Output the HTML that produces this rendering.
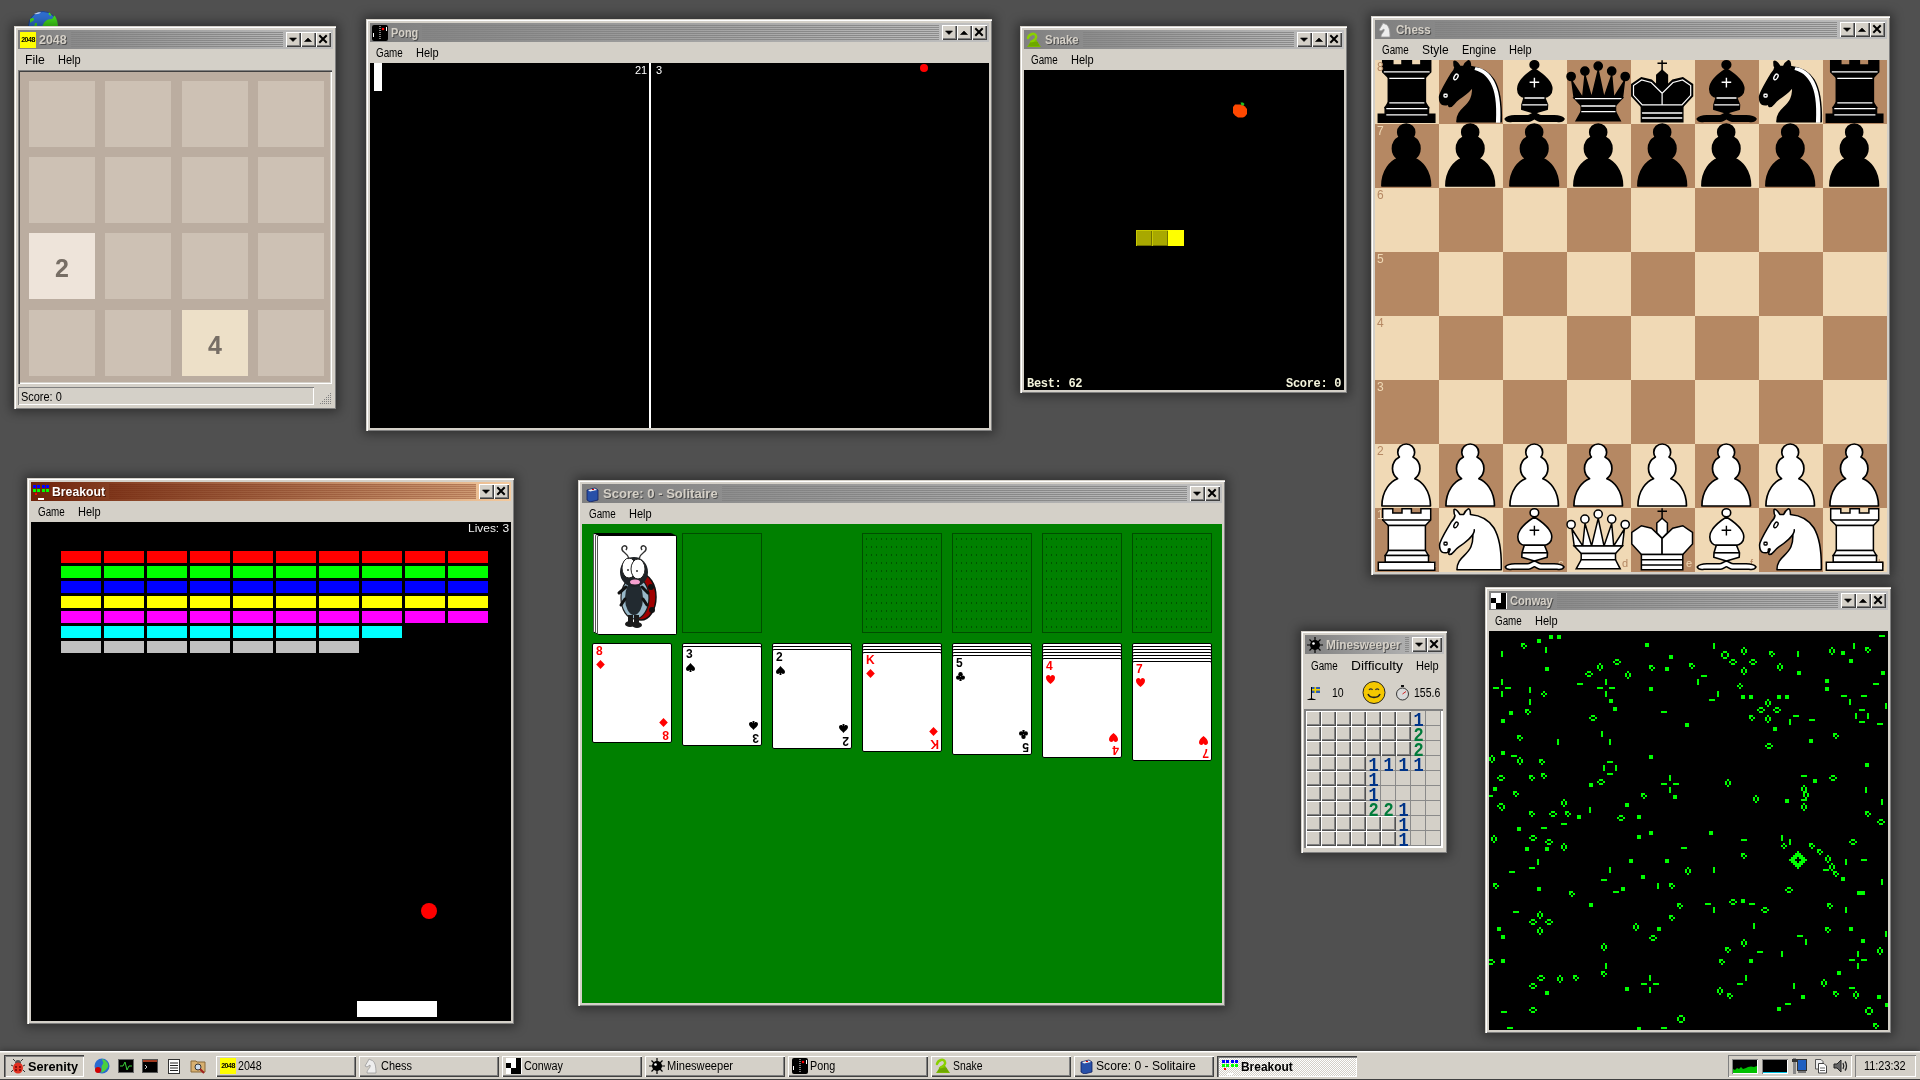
<!DOCTYPE html><html><head><meta charset="utf-8"><style>
*{margin:0;padding:0;box-sizing:border-box}
html,body{width:1920px;height:1080px;overflow:hidden;background:#505050;font-family:'Liberation Sans',sans-serif}
div,svg{position:absolute}
#root{left:0;top:0;width:1920px;height:1080px;will-change:transform;overflow:hidden}
.win{background:#d4d0c8;box-shadow:inset 1px 1px 0 #d4d0c8,inset 2px 2px 0 #ffffff,inset -1px -1px 0 #808080,0 0 10px 3px rgba(0,0,0,0.4)}
.btn{width:15px;height:15px;background:#d4d0c8;box-shadow:inset 1px 1px #ffffff,inset -1px -1px #404040,inset -2px -2px #808080}
.btn svg{left:0;top:0}
</style></head><body><div id="root"><svg style="left:28px;top:11px" width="30" height="16" viewBox="0 0 30 16"><circle cx="15" cy="15" r="14.5" fill="#2f6fd0" stroke="#1a3a80" stroke-width="0.8"/><path d="M14,16 C 16,11 18,8 24,8 C 26,7 25,4 27,5 C 29,8 30,12 30,16 Z" fill="#44dd1a"/><path d="M2,8 C 4,7 6,6 6,9 C 5,11 3,10 2,12 Z" fill="#44dd1a"/><path d="M6,16 L7,12 L9,12 L9,16 Z" fill="#44dd1a"/><path d="M21,1.5 C 22,2 24,4 23,5 C 21,4 20,3 21,1.5 Z" fill="#44dd1a"/><path d="M6,3 C 9,1.5 11,1 13,1.5 C 11,3 8,3.5 6,3 Z" fill="#e8f0ff" opacity="0.8"/></svg>
<div class="win" style="left:14px;top:26px;width:322px;height:383px"></div>
<div style="left:18px;top:30px;width:315px;height:19px;background:linear-gradient(to right,#808080,#c0c0c0)"></div>
<div style="left:71px;top:32px;width:212px;height:15px;background:repeating-linear-gradient(to bottom,rgba(128,128,128,0.8) 0 1px,transparent 1px 2px)"></div>
<div style="left:20px;top:32px;width:16px;height:16px"><div style="left:0;top:0;width:16px;height:16px;background:#ffff00;font:bold 7px 'Liberation Sans';line-height:16px;text-align:center;letter-spacing:-0.5px;color:#000">2048</div></div>
<div style="left:39px;top:30px;height:20px;font:bold 12px 'Liberation Sans';line-height:20px;color:#d5d0c7;white-space:pre;transform:scaleX(1.036);transform-origin:0 0;text-shadow:1px 1px 0 #4c4c4c">2048</div>
<div class="btn" style="left:316px;top:32px"><svg width="15" height="15" viewBox="0 0 15 15"><path d="M4 4L10 10M10 4L4 10" stroke="#000" stroke-width="2" stroke-linecap="square"/></svg></div>
<div class="btn" style="left:301px;top:32px"><svg width="15" height="15" viewBox="0 0 15 15"><path d="M3.5 9.5L7 6L10.5 9.5Z" fill="#000" stroke="#000" stroke-width="0.6"/></svg></div>
<div class="btn" style="left:286px;top:32px"><svg width="15" height="15" viewBox="0 0 15 15"><path d="M3.5 6L10.5 6L7 9.5Z" fill="#000" stroke="#000" stroke-width="0.6"/></svg></div>
<div style="left:25px;top:50px;height:20px;font:normal 12px 'Liberation Sans';line-height:20px;color:#000;white-space:pre;transform:scaleX(1.017);transform-origin:0 0;">File</div>
<div style="left:58px;top:50px;height:20px;font:normal 12px 'Liberation Sans';line-height:20px;color:#000;white-space:pre;transform:scaleX(0.920);transform-origin:0 0;">Help</div>
<div style="left:18px;top:70px;width:314px;height:314px;background:#bbada0;box-shadow:inset 1px 1px #808080,inset 2px 2px #404040,inset -1px -1px #ffffff,inset -2px -2px #d4d0c8"></div>
<div style="left:29px;top:81px;width:66px;height:66px;background:#cdc1b4;"></div>
<div style="left:105px;top:81px;width:66px;height:66px;background:#cdc1b4;"></div>
<div style="left:182px;top:81px;width:66px;height:66px;background:#cdc1b4;"></div>
<div style="left:258px;top:81px;width:66px;height:66px;background:#cdc1b4;"></div>
<div style="left:29px;top:157px;width:66px;height:66px;background:#cdc1b4;"></div>
<div style="left:105px;top:157px;width:66px;height:66px;background:#cdc1b4;"></div>
<div style="left:182px;top:157px;width:66px;height:66px;background:#cdc1b4;"></div>
<div style="left:258px;top:157px;width:66px;height:66px;background:#cdc1b4;"></div>
<div style="left:29px;top:233px;width:66px;height:66px;background:#eee4da;"></div>
<div style="left:29px;top:233px;width:66px;height:66px;text-align:center;font:bold 25px 'Liberation Sans';line-height:70px;color:#776e65">2</div>
<div style="left:105px;top:233px;width:66px;height:66px;background:#cdc1b4;"></div>
<div style="left:182px;top:233px;width:66px;height:66px;background:#cdc1b4;"></div>
<div style="left:258px;top:233px;width:66px;height:66px;background:#cdc1b4;"></div>
<div style="left:29px;top:310px;width:66px;height:66px;background:#cdc1b4;"></div>
<div style="left:105px;top:310px;width:66px;height:66px;background:#cdc1b4;"></div>
<div style="left:182px;top:310px;width:66px;height:66px;background:#ede0c8;"></div>
<div style="left:182px;top:310px;width:66px;height:66px;text-align:center;font:bold 25px 'Liberation Sans';line-height:70px;color:#776e65">4</div>
<div style="left:258px;top:310px;width:66px;height:66px;background:#cdc1b4;"></div>
<div style="left:18px;top:387px;width:296px;height:18px;background:#d4d0c8;box-shadow:inset 1px 1px #808080,inset -1px -1px #ffffff"></div>
<div style="left:21px;top:387px;height:20px;font:normal 12px 'Liberation Sans';line-height:20px;color:#000;white-space:pre;transform:scaleX(0.911);transform-origin:0 0;">Score: 0</div>
<svg style="position:absolute;left:316px;top:391px" width="16" height="14" viewBox="0 0 16 14"><rect x="14" y="12" width="1" height="1" fill="#808080"/><rect x="12" y="12" width="1" height="1" fill="#808080"/><rect x="14" y="10" width="1" height="1" fill="#808080"/><rect x="10" y="12" width="1" height="1" fill="#808080"/><rect x="12" y="10" width="1" height="1" fill="#808080"/><rect x="14" y="8" width="1" height="1" fill="#808080"/><rect x="8" y="12" width="1" height="1" fill="#808080"/><rect x="10" y="10" width="1" height="1" fill="#808080"/><rect x="12" y="8" width="1" height="1" fill="#808080"/><rect x="14" y="6" width="1" height="1" fill="#808080"/><rect x="6" y="12" width="1" height="1" fill="#808080"/><rect x="8" y="10" width="1" height="1" fill="#808080"/><rect x="10" y="8" width="1" height="1" fill="#808080"/><rect x="12" y="6" width="1" height="1" fill="#808080"/><rect x="14" y="4" width="1" height="1" fill="#808080"/><rect x="4" y="12" width="1" height="1" fill="#808080"/><rect x="6" y="10" width="1" height="1" fill="#808080"/><rect x="8" y="8" width="1" height="1" fill="#808080"/><rect x="10" y="6" width="1" height="1" fill="#808080"/><rect x="12" y="4" width="1" height="1" fill="#808080"/><rect x="14" y="2" width="1" height="1" fill="#808080"/></svg>
<div class="win" style="left:366px;top:19px;width:626px;height:412px"></div>
<div style="left:370px;top:23px;width:619px;height:19px;background:linear-gradient(to right,#808080,#c0c0c0)"></div>
<div style="left:422px;top:25px;width:517px;height:15px;background:repeating-linear-gradient(to bottom,rgba(128,128,128,0.8) 0 1px,transparent 1px 2px)"></div>
<div style="left:372px;top:25px;width:16px;height:16px"><svg width="16" height="16" viewBox="0 0 16 16"><rect x="0" y="0" width="16" height="16" rx="2" fill="#000"/><rect x="1" y="8" width="1" height="4" fill="#fff"/><rect x="14" y="2" width="1" height="4" fill="#fff"/><path d="M8,1 V15" stroke="#fff" stroke-dasharray="1 1"/><circle cx="11" cy="4" r="1.3" fill="#f00"/></svg></div>
<div style="left:391px;top:23px;height:20px;font:bold 12px 'Liberation Sans';line-height:20px;color:#d5d0c7;white-space:pre;transform:scaleX(0.910);transform-origin:0 0;text-shadow:1px 1px 0 #4c4c4c">Pong</div>
<div class="btn" style="left:972px;top:25px"><svg width="15" height="15" viewBox="0 0 15 15"><path d="M4 4L10 10M10 4L4 10" stroke="#000" stroke-width="2" stroke-linecap="square"/></svg></div>
<div class="btn" style="left:957px;top:25px"><svg width="15" height="15" viewBox="0 0 15 15"><path d="M3.5 9.5L7 6L10.5 9.5Z" fill="#000" stroke="#000" stroke-width="0.6"/></svg></div>
<div class="btn" style="left:942px;top:25px"><svg width="15" height="15" viewBox="0 0 15 15"><path d="M3.5 6L10.5 6L7 9.5Z" fill="#000" stroke="#000" stroke-width="0.6"/></svg></div>
<div style="left:376px;top:43px;height:20px;font:normal 12px 'Liberation Sans';line-height:20px;color:#000;white-space:pre;transform:scaleX(0.818);transform-origin:0 0;">Game</div>
<div style="left:416px;top:43px;height:20px;font:normal 12px 'Liberation Sans';line-height:20px;color:#000;white-space:pre;transform:scaleX(0.920);transform-origin:0 0;">Help</div>
<div style="left:370px;top:63px;width:619px;height:365px;background:#000;"></div>
<div style="left:649px;top:63px;width:2px;height:365px;background:#fff;"></div>
<div style="left:374px;top:63px;width:8px;height:28px;background:#fff;"></div>
<div style="left:635px;top:60px;height:20px;font:normal 11px 'Liberation Sans';line-height:20px;color:#fff;white-space:pre;">21</div>
<div style="left:656px;top:60px;height:20px;font:normal 11px 'Liberation Sans';line-height:20px;color:#fff;white-space:pre;">3</div>
<div style="left:920px;top:64px;width:8px;height:8px;border-radius:50%;background:#f00"></div>
<div class="win" style="left:1020px;top:26px;width:327px;height:367px"></div>
<div style="left:1024px;top:30px;width:320px;height:19px;background:linear-gradient(to right,#808080,#c0c0c0)"></div>
<div style="left:1083px;top:32px;width:211px;height:15px;background:repeating-linear-gradient(to bottom,rgba(128,128,128,0.8) 0 1px,transparent 1px 2px)"></div>
<div style="left:1026px;top:32px;width:16px;height:16px"><svg width="16" height="16" viewBox="0 0 16 16"><path d="M1,15 L5,9 C 6,7 10,7 11,9 L15,15 Z" fill="#7ab800"/><path d="M2,6 C 3,2 9,0 10,4 C 11,7 7,9 5,10" fill="none" stroke="#8ad000" stroke-width="2.5" stroke-linecap="round"/><path d="M4,11 H12 M3,13 H13" stroke="#5a9000" stroke-width="0.8"/></svg></div>
<div style="left:1045px;top:30px;height:20px;font:bold 12px 'Liberation Sans';line-height:20px;color:#d5d0c7;white-space:pre;transform:scaleX(0.953);transform-origin:0 0;text-shadow:1px 1px 0 #4c4c4c">Snake</div>
<div class="btn" style="left:1327px;top:32px"><svg width="15" height="15" viewBox="0 0 15 15"><path d="M4 4L10 10M10 4L4 10" stroke="#000" stroke-width="2" stroke-linecap="square"/></svg></div>
<div class="btn" style="left:1312px;top:32px"><svg width="15" height="15" viewBox="0 0 15 15"><path d="M3.5 9.5L7 6L10.5 9.5Z" fill="#000" stroke="#000" stroke-width="0.6"/></svg></div>
<div class="btn" style="left:1297px;top:32px"><svg width="15" height="15" viewBox="0 0 15 15"><path d="M3.5 6L10.5 6L7 9.5Z" fill="#000" stroke="#000" stroke-width="0.6"/></svg></div>
<div style="left:1031px;top:50px;height:20px;font:normal 12px 'Liberation Sans';line-height:20px;color:#000;white-space:pre;transform:scaleX(0.818);transform-origin:0 0;">Game</div>
<div style="left:1071px;top:50px;height:20px;font:normal 12px 'Liberation Sans';line-height:20px;color:#000;white-space:pre;transform:scaleX(0.920);transform-origin:0 0;">Help</div>
<div style="left:1024px;top:70px;width:320px;height:320px;background:#000;"></div>
<div style="left:1136px;top:230px;width:16px;height:16px;background:#a8a800;box-shadow:inset 1px 1px #c8c800,inset -1px -1px #707000"></div>
<div style="left:1152px;top:230px;width:16px;height:16px;background:#a8a800;box-shadow:inset 1px 1px #c8c800,inset -1px -1px #707000"></div>
<div style="left:1168px;top:230px;width:16px;height:16px;background:#ffff00;"></div>
<svg style="left:1232px;top:102px" width="16" height="16" viewBox="0 0 16 16"><path d="M3,2.5 H8 L11,3 L13,4.5 L15,7 V12 L13,14.5 L11,15.5 H6 L3,13.5 L1,11 V5 Z" fill="#ff4800"/><path d="M8.5,0.5 H11 L12.5,2 L11.5,3.5 H9.5 Z" fill="#20c020"/></svg>
<div style="left:1027px;top:374px;height:20px;font:bold 12px 'Liberation Mono';line-height:20px;color:#f4f4dc;white-space:pre;letter-spacing:-0.3px">Best: 62</div>
<div style="left:1286px;top:374px;height:20px;font:bold 12px 'Liberation Mono';line-height:20px;color:#f4f4dc;white-space:pre;letter-spacing:-0.3px">Score: 0</div>
<div class="win" style="left:1371px;top:16px;width:519px;height:559px"></div>
<div style="left:1375px;top:20px;width:512px;height:19px;background:linear-gradient(to right,#808080,#c0c0c0)"></div>
<div style="left:1435px;top:22px;width:402px;height:15px;background:repeating-linear-gradient(to bottom,rgba(128,128,128,0.8) 0 1px,transparent 1px 2px)"></div>
<div style="left:1377px;top:22px;width:16px;height:16px"><svg width="16" height="16" viewBox="0 0 16 16"><path d="M6,1 L8,2 C 12,3 13,8 13,15 H4 C 4,11 8,10 7,7 L4,9 L2,8 L5,3 Z" fill="#eee" stroke="#999" stroke-width="0.8"/></svg></div>
<div style="left:1396px;top:20px;height:20px;font:bold 12px 'Liberation Sans';line-height:20px;color:#d5d0c7;white-space:pre;transform:scaleX(0.963);transform-origin:0 0;text-shadow:1px 1px 0 #4c4c4c">Chess</div>
<div class="btn" style="left:1870px;top:22px"><svg width="15" height="15" viewBox="0 0 15 15"><path d="M4 4L10 10M10 4L4 10" stroke="#000" stroke-width="2" stroke-linecap="square"/></svg></div>
<div class="btn" style="left:1855px;top:22px"><svg width="15" height="15" viewBox="0 0 15 15"><path d="M3.5 9.5L7 6L10.5 9.5Z" fill="#000" stroke="#000" stroke-width="0.6"/></svg></div>
<div class="btn" style="left:1840px;top:22px"><svg width="15" height="15" viewBox="0 0 15 15"><path d="M3.5 6L10.5 6L7 9.5Z" fill="#000" stroke="#000" stroke-width="0.6"/></svg></div>
<div style="left:1382px;top:40px;height:20px;font:normal 12px 'Liberation Sans';line-height:20px;color:#000;white-space:pre;transform:scaleX(0.818);transform-origin:0 0;">Game</div>
<div style="left:1422px;top:40px;height:20px;font:normal 12px 'Liberation Sans';line-height:20px;color:#000;white-space:pre;transform:scaleX(1.000);transform-origin:0 0;">Style</div>
<div style="left:1462px;top:40px;height:20px;font:normal 12px 'Liberation Sans';line-height:20px;color:#000;white-space:pre;transform:scaleX(0.910);transform-origin:0 0;">Engine</div>
<div style="left:1509px;top:40px;height:20px;font:normal 12px 'Liberation Sans';line-height:20px;color:#000;white-space:pre;transform:scaleX(0.920);transform-origin:0 0;">Help</div>
<div style="left:1375px;top:60px;width:64px;height:64px;background:#f0d9b5;"></div>
<div style="left:1439px;top:60px;width:64px;height:64px;background:#b58863;"></div>
<div style="left:1503px;top:60px;width:64px;height:64px;background:#f0d9b5;"></div>
<div style="left:1567px;top:60px;width:64px;height:64px;background:#b58863;"></div>
<div style="left:1631px;top:60px;width:64px;height:64px;background:#f0d9b5;"></div>
<div style="left:1695px;top:60px;width:64px;height:64px;background:#b58863;"></div>
<div style="left:1759px;top:60px;width:64px;height:64px;background:#f0d9b5;"></div>
<div style="left:1823px;top:60px;width:64px;height:64px;background:#b58863;"></div>
<div style="left:1375px;top:124px;width:64px;height:64px;background:#b58863;"></div>
<div style="left:1439px;top:124px;width:64px;height:64px;background:#f0d9b5;"></div>
<div style="left:1503px;top:124px;width:64px;height:64px;background:#b58863;"></div>
<div style="left:1567px;top:124px;width:64px;height:64px;background:#f0d9b5;"></div>
<div style="left:1631px;top:124px;width:64px;height:64px;background:#b58863;"></div>
<div style="left:1695px;top:124px;width:64px;height:64px;background:#f0d9b5;"></div>
<div style="left:1759px;top:124px;width:64px;height:64px;background:#b58863;"></div>
<div style="left:1823px;top:124px;width:64px;height:64px;background:#f0d9b5;"></div>
<div style="left:1375px;top:188px;width:64px;height:64px;background:#f0d9b5;"></div>
<div style="left:1439px;top:188px;width:64px;height:64px;background:#b58863;"></div>
<div style="left:1503px;top:188px;width:64px;height:64px;background:#f0d9b5;"></div>
<div style="left:1567px;top:188px;width:64px;height:64px;background:#b58863;"></div>
<div style="left:1631px;top:188px;width:64px;height:64px;background:#f0d9b5;"></div>
<div style="left:1695px;top:188px;width:64px;height:64px;background:#b58863;"></div>
<div style="left:1759px;top:188px;width:64px;height:64px;background:#f0d9b5;"></div>
<div style="left:1823px;top:188px;width:64px;height:64px;background:#b58863;"></div>
<div style="left:1375px;top:252px;width:64px;height:64px;background:#b58863;"></div>
<div style="left:1439px;top:252px;width:64px;height:64px;background:#f0d9b5;"></div>
<div style="left:1503px;top:252px;width:64px;height:64px;background:#b58863;"></div>
<div style="left:1567px;top:252px;width:64px;height:64px;background:#f0d9b5;"></div>
<div style="left:1631px;top:252px;width:64px;height:64px;background:#b58863;"></div>
<div style="left:1695px;top:252px;width:64px;height:64px;background:#f0d9b5;"></div>
<div style="left:1759px;top:252px;width:64px;height:64px;background:#b58863;"></div>
<div style="left:1823px;top:252px;width:64px;height:64px;background:#f0d9b5;"></div>
<div style="left:1375px;top:316px;width:64px;height:64px;background:#f0d9b5;"></div>
<div style="left:1439px;top:316px;width:64px;height:64px;background:#b58863;"></div>
<div style="left:1503px;top:316px;width:64px;height:64px;background:#f0d9b5;"></div>
<div style="left:1567px;top:316px;width:64px;height:64px;background:#b58863;"></div>
<div style="left:1631px;top:316px;width:64px;height:64px;background:#f0d9b5;"></div>
<div style="left:1695px;top:316px;width:64px;height:64px;background:#b58863;"></div>
<div style="left:1759px;top:316px;width:64px;height:64px;background:#f0d9b5;"></div>
<div style="left:1823px;top:316px;width:64px;height:64px;background:#b58863;"></div>
<div style="left:1375px;top:380px;width:64px;height:64px;background:#b58863;"></div>
<div style="left:1439px;top:380px;width:64px;height:64px;background:#f0d9b5;"></div>
<div style="left:1503px;top:380px;width:64px;height:64px;background:#b58863;"></div>
<div style="left:1567px;top:380px;width:64px;height:64px;background:#f0d9b5;"></div>
<div style="left:1631px;top:380px;width:64px;height:64px;background:#b58863;"></div>
<div style="left:1695px;top:380px;width:64px;height:64px;background:#f0d9b5;"></div>
<div style="left:1759px;top:380px;width:64px;height:64px;background:#b58863;"></div>
<div style="left:1823px;top:380px;width:64px;height:64px;background:#f0d9b5;"></div>
<div style="left:1375px;top:444px;width:64px;height:64px;background:#f0d9b5;"></div>
<div style="left:1439px;top:444px;width:64px;height:64px;background:#b58863;"></div>
<div style="left:1503px;top:444px;width:64px;height:64px;background:#f0d9b5;"></div>
<div style="left:1567px;top:444px;width:64px;height:64px;background:#b58863;"></div>
<div style="left:1631px;top:444px;width:64px;height:64px;background:#f0d9b5;"></div>
<div style="left:1695px;top:444px;width:64px;height:64px;background:#b58863;"></div>
<div style="left:1759px;top:444px;width:64px;height:64px;background:#f0d9b5;"></div>
<div style="left:1823px;top:444px;width:64px;height:64px;background:#b58863;"></div>
<div style="left:1375px;top:508px;width:64px;height:64px;background:#b58863;"></div>
<div style="left:1439px;top:508px;width:64px;height:64px;background:#f0d9b5;"></div>
<div style="left:1503px;top:508px;width:64px;height:64px;background:#b58863;"></div>
<div style="left:1567px;top:508px;width:64px;height:64px;background:#f0d9b5;"></div>
<div style="left:1631px;top:508px;width:64px;height:64px;background:#b58863;"></div>
<div style="left:1695px;top:508px;width:64px;height:64px;background:#f0d9b5;"></div>
<div style="left:1759px;top:508px;width:64px;height:64px;background:#b58863;"></div>
<div style="left:1823px;top:508px;width:64px;height:64px;background:#f0d9b5;"></div>
<div style="left:1430px;top:556px;height:14px;font:11px 'Liberation Sans';line-height:14px;color:#f0d9b5">a</div>
<div style="left:1494px;top:556px;height:14px;font:11px 'Liberation Sans';line-height:14px;color:#b58863">b</div>
<div style="left:1558px;top:556px;height:14px;font:11px 'Liberation Sans';line-height:14px;color:#f0d9b5">c</div>
<div style="left:1622px;top:556px;height:14px;font:11px 'Liberation Sans';line-height:14px;color:#b58863">d</div>
<div style="left:1686px;top:556px;height:14px;font:11px 'Liberation Sans';line-height:14px;color:#f0d9b5">e</div>
<div style="left:1750px;top:556px;height:14px;font:11px 'Liberation Sans';line-height:14px;color:#b58863">f</div>
<div style="left:1814px;top:556px;height:14px;font:11px 'Liberation Sans';line-height:14px;color:#f0d9b5">g</div>
<div style="left:1878px;top:556px;height:14px;font:11px 'Liberation Sans';line-height:14px;color:#b58863">h</div>
<div style="left:1375px;top:60px;width:64px;height:64px"><svg width="64" height="64" viewBox="0 0 64 64" style="overflow:visible"><g fill="#000" stroke="#000" stroke-width="1.5" stroke-linejoin="miter"><path d="M7.7,12 V0.8 H17.8 V5 H27 V0.8 H36.4 V5 H45.9 V0.8 H55.7 V12 L50.4,17.5 H13.3 Z"/><path d="M13.3,17.5 H50.4 V42.4 H13.3 Z"/><path d="M13.3,42.4 H50.4 L53.5,47.6 H10.2 Z"/><path d="M10.2,47.6 H53.5 V54.2 H10.2 Z"/><path d="M3.3,54.2 H59.8 V62.2 H3.3 Z"/></g><path d="M8.8,11.8 H54.6 M14.3,18.4 H49.4 M14.3,42.8 H49.4 M11.3,48.6 H52.4 M11.3,54.8 H52.4" stroke="#fff" stroke-width="1.2" stroke-linecap="butt"/></svg></div>
<div style="left:1375px;top:124px;width:64px;height:64px"><svg width="64" height="64" viewBox="7.73 8.97 30.3 31.5" preserveAspectRatio="none" style="overflow:visible"><path d="m 22.5,9 c -2.21,0 -4,1.79 -4,4 0,0.89 0.29,1.71 0.78,2.38 C 17.33,16.5 16,18.59 16,21 c 0,2.03 0.94,3.84 2.41,5.03 C 15.41,27.09 11,31.58 11,39.5 H 34 C 34,31.58 29.59,27.09 26.59,26.03 28.06,24.84 29,23.03 29,21 29,18.59 27.67,16.5 25.72,15.38 26.21,14.71 26.5,13.89 26.5,13 c 0,-2.21 -1.79,-4 -4,-4 z" fill="#000" stroke="#000" stroke-width="0.8" stroke-linecap="round" stroke-linejoin="round"/></svg></div>
<div style="left:1439px;top:60px;width:64px;height:64px"><svg width="64" height="64" viewBox="5.7 6.65 33.2 33.5" preserveAspectRatio="none" style="overflow:visible"><g fill="#000" stroke="#000" stroke-width="0.8" stroke-linecap="round" stroke-linejoin="round">
<path d="M 22,10 C 32.5,11 38.5,18 38,39 L 15,39 C 15,30 25,32.5 23,18"/>
<path d="M 24,18 C 24.38,20.91 18.45,25.37 16,27 C 13,29 13.18,31.34 11,31 C 9.958,30.06 12.41,27.96 11,28 C 10,28 11.19,29.23 10,30 C 9,30 5.997,31 6,26 C 6,24 12,14 12,14 C 12,14 13.89,12.1 14,10.5 C 13.27,9.506 13.5,8.5 13.5,7.5 C 14.5,6.5 16.5,10 16.5,10 L 18.5,10 C 18.5,10 19.28,8.008 21,7 C 22,7 22,10 22,10"/><rect x="8.3" y="24.6" width="1.6" height="1.4" rx="0.4" fill="#000" stroke="#fff" stroke-width="0.7"/><ellipse cx="14.5" cy="15.5" rx="0.9" ry="1.6" transform="rotate(30 14.5 15.5)" fill="#000" stroke="#fff" stroke-width="0.7"/><path d="M 24.55,10.4 L 24.1,11.85 L 24.6,12 C 27.75,13 30.25,14.49 32.5,18.75 C 34.75,23.01 35.75,29.06 35.25,39 L 35.2,39.5 L 37.45,39.5 L 37.5,39 C 38,28.94 36.62,22.15 34.25,17.66 C 31.88,13.17 28.46,11.02 25.06,10.5 L 24.55,10.4 z" fill="#fff" stroke="none"/></g></svg></div>
<div style="left:1439px;top:124px;width:64px;height:64px"><svg width="64" height="64" viewBox="7.73 8.97 30.3 31.5" preserveAspectRatio="none" style="overflow:visible"><path d="m 22.5,9 c -2.21,0 -4,1.79 -4,4 0,0.89 0.29,1.71 0.78,2.38 C 17.33,16.5 16,18.59 16,21 c 0,2.03 0.94,3.84 2.41,5.03 C 15.41,27.09 11,31.58 11,39.5 H 34 C 34,31.58 29.59,27.09 26.59,26.03 28.06,24.84 29,23.03 29,21 29,18.59 27.67,16.5 25.72,15.38 26.21,14.71 26.5,13.89 26.5,13 c 0,-2.21 -1.79,-4 -4,-4 z" fill="#000" stroke="#000" stroke-width="0.8" stroke-linecap="round" stroke-linejoin="round"/></svg></div>
<div style="left:1503px;top:60px;width:64px;height:64px"><svg width="64" height="64" viewBox="0 0 64 64" style="overflow:visible"><g fill="#000" stroke="#000" stroke-width="1.6" stroke-linecap="round" stroke-linejoin="round">
<ellipse cx="31.4" cy="4.8" rx="4.3" ry="4.1"/>
<path d="M31.4,9 C 22,15 14.8,22 14.8,29 C 14.8,34 18,37 21.3,37.2 H 41.5 C 45,37 48.8,34 48.8,29 C 48.8,22 41,15 31.4,9 Z"/>
<path d="M21.3,37.2 L19,44.8 L18.8,49.3 L31.4,53 L44.2,49.3 L44.5,44.8 L41.5,37.2 Z"/>
<path d="M2.2,59 C 4,56.5 7,55.8 12,55.8 H 24.5 C 27,55.8 29,53.2 31.4,53.2 C 33.8,53.2 35.8,55.8 38.3,55.8 H 51 C 56,55.8 59.5,56.5 61,59 C 60,61.3 57,61.8 54,61.3 H 37 C 34.5,61.3 32.5,58.8 31.4,58.8 C 30.3,58.8 28.3,61.3 25.8,61.3 H 9 C 6,61.8 3.2,61.3 2.2,59 Z"/>
</g>
<path d="M31.4,17.7 V27.6 M26.6,22.3 H36.2" stroke="#fff" stroke-width="1.4" fill="none"/><path d="M22,38 H41 M19.8,44.8 H43.8" stroke="#fff" stroke-width="1.3" stroke-linecap="round"/></svg></div>
<div style="left:1503px;top:124px;width:64px;height:64px"><svg width="64" height="64" viewBox="7.73 8.97 30.3 31.5" preserveAspectRatio="none" style="overflow:visible"><path d="m 22.5,9 c -2.21,0 -4,1.79 -4,4 0,0.89 0.29,1.71 0.78,2.38 C 17.33,16.5 16,18.59 16,21 c 0,2.03 0.94,3.84 2.41,5.03 C 15.41,27.09 11,31.58 11,39.5 H 34 C 34,31.58 29.59,27.09 26.59,26.03 28.06,24.84 29,23.03 29,21 29,18.59 27.67,16.5 25.72,15.38 26.21,14.71 26.5,13.89 26.5,13 c 0,-2.21 -1.79,-4 -4,-4 z" fill="#000" stroke="#000" stroke-width="0.8" stroke-linecap="round" stroke-linejoin="round"/></svg></div>
<div style="left:1567px;top:60px;width:64px;height:64px"><svg width="64" height="64" viewBox="0 0 64 64" style="overflow:visible"><g fill="#000" stroke="#000" stroke-width="1.5" stroke-linejoin="miter"><path d="M7.2,37.9 L4.9,21 L15.7,37.9 L18,15.5 L24.6,37.9 L31.2,10.5 L37,37.9 L44.7,15.5 L46.7,37.9 L57.4,21 L55.4,37.9 Z"/><path d="M7.2,37.9 H55.4 L48.5,45.4 H14.2 Z"/><path d="M14.2,45.4 H48.5 V51.7 H14.2 Z"/><path d="M14.2,51.7 H48.5 L53.2,60.8 H9.2 Z"/><circle cx="4.1" cy="16.5" r="4.1"/><circle cx="17.9" cy="11.1" r="4.1"/><circle cx="31.2" cy="6.1" r="4.1"/><circle cx="44.7" cy="11.1" r="4.1"/><circle cx="58.2" cy="16.5" r="4.1"/></g><path d="M8.5,38.6 H54 M14.8,46 H48 M14.8,51.7 H48" stroke="#fff" stroke-width="1.3" stroke-linecap="round"/></svg></div>
<div style="left:1567px;top:124px;width:64px;height:64px"><svg width="64" height="64" viewBox="7.73 8.97 30.3 31.5" preserveAspectRatio="none" style="overflow:visible"><path d="m 22.5,9 c -2.21,0 -4,1.79 -4,4 0,0.89 0.29,1.71 0.78,2.38 C 17.33,16.5 16,18.59 16,21 c 0,2.03 0.94,3.84 2.41,5.03 C 15.41,27.09 11,31.58 11,39.5 H 34 C 34,31.58 29.59,27.09 26.59,26.03 28.06,24.84 29,23.03 29,21 29,18.59 27.67,16.5 25.72,15.38 26.21,14.71 26.5,13.89 26.5,13 c 0,-2.21 -1.79,-4 -4,-4 z" fill="#000" stroke="#000" stroke-width="0.8" stroke-linecap="round" stroke-linejoin="round"/></svg></div>
<div style="left:1631px;top:60px;width:64px;height:64px"><svg width="64" height="64" viewBox="0 0 64 64" style="overflow:visible"><g fill="#000" stroke="#000" stroke-width="1.5" stroke-linejoin="miter"><path d="M31.1,0.3 V10.2 M26.5,3.2 H36" fill="none"/><path d="M31.1,10.2 L36.4,15 V24.7 L31.1,30.4 L25.8,24.7 V15 Z"/><path d="M31.1,30.4 L20.5,20.2 L10.4,17.7 L0.8,24.5 V36 L10.4,46.4 H31.1 Z"/><path d="M31.1,30.4 L41.7,20.2 L51.8,17.7 L61.5,24.5 V36 L51.8,46.4 H31.1 Z"/><path d="M10.4,46.4 H51.8 V61.8 H10.4 Z"/></g><path d="M31.1,33.2 L20.2,22.5 L10.6,20 L2.5,25.6 V35.3 L11.3,44.8 H50.9 L59.7,35.3 V25.6 L51.6,20 L42,22.5 L31.1,33.2 V44.8" fill="none" stroke="#fff" stroke-width="1.2" stroke-linejoin="miter"/><path d="M11.5,53 H50.8 M11.5,58 H50.8" stroke="#fff" stroke-width="1.3" stroke-linecap="round"/></svg></div>
<div style="left:1631px;top:124px;width:64px;height:64px"><svg width="64" height="64" viewBox="7.73 8.97 30.3 31.5" preserveAspectRatio="none" style="overflow:visible"><path d="m 22.5,9 c -2.21,0 -4,1.79 -4,4 0,0.89 0.29,1.71 0.78,2.38 C 17.33,16.5 16,18.59 16,21 c 0,2.03 0.94,3.84 2.41,5.03 C 15.41,27.09 11,31.58 11,39.5 H 34 C 34,31.58 29.59,27.09 26.59,26.03 28.06,24.84 29,23.03 29,21 29,18.59 27.67,16.5 25.72,15.38 26.21,14.71 26.5,13.89 26.5,13 c 0,-2.21 -1.79,-4 -4,-4 z" fill="#000" stroke="#000" stroke-width="0.8" stroke-linecap="round" stroke-linejoin="round"/></svg></div>
<div style="left:1695px;top:60px;width:64px;height:64px"><svg width="64" height="64" viewBox="0 0 64 64" style="overflow:visible"><g fill="#000" stroke="#000" stroke-width="1.6" stroke-linecap="round" stroke-linejoin="round">
<ellipse cx="31.4" cy="4.8" rx="4.3" ry="4.1"/>
<path d="M31.4,9 C 22,15 14.8,22 14.8,29 C 14.8,34 18,37 21.3,37.2 H 41.5 C 45,37 48.8,34 48.8,29 C 48.8,22 41,15 31.4,9 Z"/>
<path d="M21.3,37.2 L19,44.8 L18.8,49.3 L31.4,53 L44.2,49.3 L44.5,44.8 L41.5,37.2 Z"/>
<path d="M2.2,59 C 4,56.5 7,55.8 12,55.8 H 24.5 C 27,55.8 29,53.2 31.4,53.2 C 33.8,53.2 35.8,55.8 38.3,55.8 H 51 C 56,55.8 59.5,56.5 61,59 C 60,61.3 57,61.8 54,61.3 H 37 C 34.5,61.3 32.5,58.8 31.4,58.8 C 30.3,58.8 28.3,61.3 25.8,61.3 H 9 C 6,61.8 3.2,61.3 2.2,59 Z"/>
</g>
<path d="M31.4,17.7 V27.6 M26.6,22.3 H36.2" stroke="#fff" stroke-width="1.4" fill="none"/><path d="M22,38 H41 M19.8,44.8 H43.8" stroke="#fff" stroke-width="1.3" stroke-linecap="round"/></svg></div>
<div style="left:1695px;top:124px;width:64px;height:64px"><svg width="64" height="64" viewBox="7.73 8.97 30.3 31.5" preserveAspectRatio="none" style="overflow:visible"><path d="m 22.5,9 c -2.21,0 -4,1.79 -4,4 0,0.89 0.29,1.71 0.78,2.38 C 17.33,16.5 16,18.59 16,21 c 0,2.03 0.94,3.84 2.41,5.03 C 15.41,27.09 11,31.58 11,39.5 H 34 C 34,31.58 29.59,27.09 26.59,26.03 28.06,24.84 29,23.03 29,21 29,18.59 27.67,16.5 25.72,15.38 26.21,14.71 26.5,13.89 26.5,13 c 0,-2.21 -1.79,-4 -4,-4 z" fill="#000" stroke="#000" stroke-width="0.8" stroke-linecap="round" stroke-linejoin="round"/></svg></div>
<div style="left:1759px;top:60px;width:64px;height:64px"><svg width="64" height="64" viewBox="5.7 6.65 33.2 33.5" preserveAspectRatio="none" style="overflow:visible"><g fill="#000" stroke="#000" stroke-width="0.8" stroke-linecap="round" stroke-linejoin="round">
<path d="M 22,10 C 32.5,11 38.5,18 38,39 L 15,39 C 15,30 25,32.5 23,18"/>
<path d="M 24,18 C 24.38,20.91 18.45,25.37 16,27 C 13,29 13.18,31.34 11,31 C 9.958,30.06 12.41,27.96 11,28 C 10,28 11.19,29.23 10,30 C 9,30 5.997,31 6,26 C 6,24 12,14 12,14 C 12,14 13.89,12.1 14,10.5 C 13.27,9.506 13.5,8.5 13.5,7.5 C 14.5,6.5 16.5,10 16.5,10 L 18.5,10 C 18.5,10 19.28,8.008 21,7 C 22,7 22,10 22,10"/><rect x="8.3" y="24.6" width="1.6" height="1.4" rx="0.4" fill="#000" stroke="#fff" stroke-width="0.7"/><ellipse cx="14.5" cy="15.5" rx="0.9" ry="1.6" transform="rotate(30 14.5 15.5)" fill="#000" stroke="#fff" stroke-width="0.7"/><path d="M 24.55,10.4 L 24.1,11.85 L 24.6,12 C 27.75,13 30.25,14.49 32.5,18.75 C 34.75,23.01 35.75,29.06 35.25,39 L 35.2,39.5 L 37.45,39.5 L 37.5,39 C 38,28.94 36.62,22.15 34.25,17.66 C 31.88,13.17 28.46,11.02 25.06,10.5 L 24.55,10.4 z" fill="#fff" stroke="none"/></g></svg></div>
<div style="left:1759px;top:124px;width:64px;height:64px"><svg width="64" height="64" viewBox="7.73 8.97 30.3 31.5" preserveAspectRatio="none" style="overflow:visible"><path d="m 22.5,9 c -2.21,0 -4,1.79 -4,4 0,0.89 0.29,1.71 0.78,2.38 C 17.33,16.5 16,18.59 16,21 c 0,2.03 0.94,3.84 2.41,5.03 C 15.41,27.09 11,31.58 11,39.5 H 34 C 34,31.58 29.59,27.09 26.59,26.03 28.06,24.84 29,23.03 29,21 29,18.59 27.67,16.5 25.72,15.38 26.21,14.71 26.5,13.89 26.5,13 c 0,-2.21 -1.79,-4 -4,-4 z" fill="#000" stroke="#000" stroke-width="0.8" stroke-linecap="round" stroke-linejoin="round"/></svg></div>
<div style="left:1823px;top:60px;width:64px;height:64px"><svg width="64" height="64" viewBox="0 0 64 64" style="overflow:visible"><g fill="#000" stroke="#000" stroke-width="1.5" stroke-linejoin="miter"><path d="M7.7,12 V0.8 H17.8 V5 H27 V0.8 H36.4 V5 H45.9 V0.8 H55.7 V12 L50.4,17.5 H13.3 Z"/><path d="M13.3,17.5 H50.4 V42.4 H13.3 Z"/><path d="M13.3,42.4 H50.4 L53.5,47.6 H10.2 Z"/><path d="M10.2,47.6 H53.5 V54.2 H10.2 Z"/><path d="M3.3,54.2 H59.8 V62.2 H3.3 Z"/></g><path d="M8.8,11.8 H54.6 M14.3,18.4 H49.4 M14.3,42.8 H49.4 M11.3,48.6 H52.4 M11.3,54.8 H52.4" stroke="#fff" stroke-width="1.2" stroke-linecap="butt"/></svg></div>
<div style="left:1823px;top:124px;width:64px;height:64px"><svg width="64" height="64" viewBox="7.73 8.97 30.3 31.5" preserveAspectRatio="none" style="overflow:visible"><path d="m 22.5,9 c -2.21,0 -4,1.79 -4,4 0,0.89 0.29,1.71 0.78,2.38 C 17.33,16.5 16,18.59 16,21 c 0,2.03 0.94,3.84 2.41,5.03 C 15.41,27.09 11,31.58 11,39.5 H 34 C 34,31.58 29.59,27.09 26.59,26.03 28.06,24.84 29,23.03 29,21 29,18.59 27.67,16.5 25.72,15.38 26.21,14.71 26.5,13.89 26.5,13 c 0,-2.21 -1.79,-4 -4,-4 z" fill="#000" stroke="#000" stroke-width="0.8" stroke-linecap="round" stroke-linejoin="round"/></svg></div>
<div style="left:1375px;top:444px;width:64px;height:64px"><svg width="64" height="64" viewBox="7.73 8.97 30.3 31.5" preserveAspectRatio="none" style="overflow:visible"><path d="m 22.5,9 c -2.21,0 -4,1.79 -4,4 0,0.89 0.29,1.71 0.78,2.38 C 17.33,16.5 16,18.59 16,21 c 0,2.03 0.94,3.84 2.41,5.03 C 15.41,27.09 11,31.58 11,39.5 H 34 C 34,31.58 29.59,27.09 26.59,26.03 28.06,24.84 29,23.03 29,21 29,18.59 27.67,16.5 25.72,15.38 26.21,14.71 26.5,13.89 26.5,13 c 0,-2.21 -1.79,-4 -4,-4 z" fill="#fff" stroke="#000" stroke-width="0.8" stroke-linecap="round" stroke-linejoin="round"/></svg></div>
<div style="left:1375px;top:508px;width:64px;height:64px"><svg width="64" height="64" viewBox="0 0 64 64" style="overflow:visible"><g fill="#fff" stroke="#000" stroke-width="1.5" stroke-linejoin="miter"><path d="M7.7,12 V0.8 H17.8 V5 H27 V0.8 H36.4 V5 H45.9 V0.8 H55.7 V12 L50.4,17.5 H13.3 Z"/><path d="M13.3,17.5 H50.4 V42.4 H13.3 Z"/><path d="M13.3,42.4 H50.4 L53.5,47.6 H10.2 Z"/><path d="M10.2,47.6 H53.5 V54.2 H10.2 Z"/><path d="M3.3,54.2 H59.8 V62.2 H3.3 Z"/></g><path d="M7.7,12 H55.7" stroke="#000" stroke-width="1.5"/></svg></div>
<div style="left:1439px;top:444px;width:64px;height:64px"><svg width="64" height="64" viewBox="7.73 8.97 30.3 31.5" preserveAspectRatio="none" style="overflow:visible"><path d="m 22.5,9 c -2.21,0 -4,1.79 -4,4 0,0.89 0.29,1.71 0.78,2.38 C 17.33,16.5 16,18.59 16,21 c 0,2.03 0.94,3.84 2.41,5.03 C 15.41,27.09 11,31.58 11,39.5 H 34 C 34,31.58 29.59,27.09 26.59,26.03 28.06,24.84 29,23.03 29,21 29,18.59 27.67,16.5 25.72,15.38 26.21,14.71 26.5,13.89 26.5,13 c 0,-2.21 -1.79,-4 -4,-4 z" fill="#fff" stroke="#000" stroke-width="0.8" stroke-linecap="round" stroke-linejoin="round"/></svg></div>
<div style="left:1439px;top:508px;width:64px;height:64px"><svg width="64" height="64" viewBox="5.7 6.65 33.2 33.5" preserveAspectRatio="none" style="overflow:visible"><g fill="#fff" stroke="#000" stroke-width="0.8" stroke-linecap="round" stroke-linejoin="round">
<path d="M 22,10 C 32.5,11 38.5,18 38,39 L 15,39 C 15,30 25,32.5 23,18"/>
<path d="M 24,18 C 24.38,20.91 18.45,25.37 16,27 C 13,29 13.18,31.34 11,31 C 9.958,30.06 12.41,27.96 11,28 C 10,28 11.19,29.23 10,30 C 9,30 5.997,31 6,26 C 6,24 12,14 12,14 C 12,14 13.89,12.1 14,10.5 C 13.27,9.506 13.5,8.5 13.5,7.5 C 14.5,6.5 16.5,10 16.5,10 L 18.5,10 C 18.5,10 19.28,8.008 21,7 C 22,7 22,10 22,10"/><rect x="8.3" y="24.6" width="1.6" height="1.4" rx="0.4" fill="#fff" stroke="#000" stroke-width="0.7"/><ellipse cx="14.5" cy="15.5" rx="0.9" ry="1.6" transform="rotate(30 14.5 15.5)" fill="#fff" stroke="#000" stroke-width="0.7"/></g></svg></div>
<div style="left:1503px;top:444px;width:64px;height:64px"><svg width="64" height="64" viewBox="7.73 8.97 30.3 31.5" preserveAspectRatio="none" style="overflow:visible"><path d="m 22.5,9 c -2.21,0 -4,1.79 -4,4 0,0.89 0.29,1.71 0.78,2.38 C 17.33,16.5 16,18.59 16,21 c 0,2.03 0.94,3.84 2.41,5.03 C 15.41,27.09 11,31.58 11,39.5 H 34 C 34,31.58 29.59,27.09 26.59,26.03 28.06,24.84 29,23.03 29,21 29,18.59 27.67,16.5 25.72,15.38 26.21,14.71 26.5,13.89 26.5,13 c 0,-2.21 -1.79,-4 -4,-4 z" fill="#fff" stroke="#000" stroke-width="0.8" stroke-linecap="round" stroke-linejoin="round"/></svg></div>
<div style="left:1503px;top:508px;width:64px;height:64px"><svg width="64" height="64" viewBox="0 0 64 64" style="overflow:visible"><g fill="#fff" stroke="#000" stroke-width="1.6" stroke-linecap="round" stroke-linejoin="round">
<ellipse cx="31.4" cy="4.8" rx="4.3" ry="4.1"/>
<path d="M31.4,9 C 22,15 14.8,22 14.8,29 C 14.8,34 18,37 21.3,37.2 H 41.5 C 45,37 48.8,34 48.8,29 C 48.8,22 41,15 31.4,9 Z"/>
<path d="M21.3,37.2 L19,44.8 L18.8,49.3 L31.4,53 L44.2,49.3 L44.5,44.8 L41.5,37.2 Z"/>
<path d="M2.2,59 C 4,56.5 7,55.8 12,55.8 H 24.5 C 27,55.8 29,53.2 31.4,53.2 C 33.8,53.2 35.8,55.8 38.3,55.8 H 51 C 56,55.8 59.5,56.5 61,59 C 60,61.3 57,61.8 54,61.3 H 37 C 34.5,61.3 32.5,58.8 31.4,58.8 C 30.3,58.8 28.3,61.3 25.8,61.3 H 9 C 6,61.8 3.2,61.3 2.2,59 Z"/>
</g>
<path d="M31.4,17.7 V27.6 M26.6,22.3 H36.2" stroke="#000" stroke-width="1.4" fill="none"/><path d="M19,44.8 H44.5" stroke="#000" stroke-width="1.6"/></svg></div>
<div style="left:1567px;top:444px;width:64px;height:64px"><svg width="64" height="64" viewBox="7.73 8.97 30.3 31.5" preserveAspectRatio="none" style="overflow:visible"><path d="m 22.5,9 c -2.21,0 -4,1.79 -4,4 0,0.89 0.29,1.71 0.78,2.38 C 17.33,16.5 16,18.59 16,21 c 0,2.03 0.94,3.84 2.41,5.03 C 15.41,27.09 11,31.58 11,39.5 H 34 C 34,31.58 29.59,27.09 26.59,26.03 28.06,24.84 29,23.03 29,21 29,18.59 27.67,16.5 25.72,15.38 26.21,14.71 26.5,13.89 26.5,13 c 0,-2.21 -1.79,-4 -4,-4 z" fill="#fff" stroke="#000" stroke-width="0.8" stroke-linecap="round" stroke-linejoin="round"/></svg></div>
<div style="left:1567px;top:508px;width:64px;height:64px"><svg width="64" height="64" viewBox="0 0 64 64" style="overflow:visible"><g fill="#fff" stroke="#000" stroke-width="1.5" stroke-linejoin="miter"><path d="M7.2,37.9 L4.9,21 L15.7,37.9 L18,15.5 L24.6,37.9 L31.2,10.5 L37,37.9 L44.7,15.5 L46.7,37.9 L57.4,21 L55.4,37.9 Z"/><path d="M7.2,37.9 H55.4 L48.5,45.4 H14.2 Z"/><path d="M14.2,45.4 H48.5 V51.7 H14.2 Z"/><path d="M14.2,51.7 H48.5 L53.2,60.8 H9.2 Z"/><circle cx="4.1" cy="16.5" r="4.1"/><circle cx="17.9" cy="11.1" r="4.1"/><circle cx="31.2" cy="6.1" r="4.1"/><circle cx="44.7" cy="11.1" r="4.1"/><circle cx="58.2" cy="16.5" r="4.1"/></g></svg></div>
<div style="left:1631px;top:444px;width:64px;height:64px"><svg width="64" height="64" viewBox="7.73 8.97 30.3 31.5" preserveAspectRatio="none" style="overflow:visible"><path d="m 22.5,9 c -2.21,0 -4,1.79 -4,4 0,0.89 0.29,1.71 0.78,2.38 C 17.33,16.5 16,18.59 16,21 c 0,2.03 0.94,3.84 2.41,5.03 C 15.41,27.09 11,31.58 11,39.5 H 34 C 34,31.58 29.59,27.09 26.59,26.03 28.06,24.84 29,23.03 29,21 29,18.59 27.67,16.5 25.72,15.38 26.21,14.71 26.5,13.89 26.5,13 c 0,-2.21 -1.79,-4 -4,-4 z" fill="#fff" stroke="#000" stroke-width="0.8" stroke-linecap="round" stroke-linejoin="round"/></svg></div>
<div style="left:1631px;top:508px;width:64px;height:64px"><svg width="64" height="64" viewBox="0 0 64 64" style="overflow:visible"><g fill="#fff" stroke="#000" stroke-width="1.5" stroke-linejoin="miter"><path d="M31.1,0.3 V10.2 M26.5,3.2 H36" fill="none"/><path d="M31.1,10.2 L36.4,15 V24.7 L31.1,30.4 L25.8,24.7 V15 Z"/><path d="M31.1,30.4 L20.5,20.2 L10.4,17.7 L0.8,24.5 V36 L10.4,46.4 H31.1 Z"/><path d="M31.1,30.4 L41.7,20.2 L51.8,17.7 L61.5,24.5 V36 L51.8,46.4 H31.1 Z"/><path d="M10.4,46.4 H51.8 V61.8 H10.4 Z"/></g><path d="M10.4,51.7 H51.8 M10.4,57 H51.8" stroke="#000" stroke-width="1.5"/></svg></div>
<div style="left:1695px;top:444px;width:64px;height:64px"><svg width="64" height="64" viewBox="7.73 8.97 30.3 31.5" preserveAspectRatio="none" style="overflow:visible"><path d="m 22.5,9 c -2.21,0 -4,1.79 -4,4 0,0.89 0.29,1.71 0.78,2.38 C 17.33,16.5 16,18.59 16,21 c 0,2.03 0.94,3.84 2.41,5.03 C 15.41,27.09 11,31.58 11,39.5 H 34 C 34,31.58 29.59,27.09 26.59,26.03 28.06,24.84 29,23.03 29,21 29,18.59 27.67,16.5 25.72,15.38 26.21,14.71 26.5,13.89 26.5,13 c 0,-2.21 -1.79,-4 -4,-4 z" fill="#fff" stroke="#000" stroke-width="0.8" stroke-linecap="round" stroke-linejoin="round"/></svg></div>
<div style="left:1695px;top:508px;width:64px;height:64px"><svg width="64" height="64" viewBox="0 0 64 64" style="overflow:visible"><g fill="#fff" stroke="#000" stroke-width="1.6" stroke-linecap="round" stroke-linejoin="round">
<ellipse cx="31.4" cy="4.8" rx="4.3" ry="4.1"/>
<path d="M31.4,9 C 22,15 14.8,22 14.8,29 C 14.8,34 18,37 21.3,37.2 H 41.5 C 45,37 48.8,34 48.8,29 C 48.8,22 41,15 31.4,9 Z"/>
<path d="M21.3,37.2 L19,44.8 L18.8,49.3 L31.4,53 L44.2,49.3 L44.5,44.8 L41.5,37.2 Z"/>
<path d="M2.2,59 C 4,56.5 7,55.8 12,55.8 H 24.5 C 27,55.8 29,53.2 31.4,53.2 C 33.8,53.2 35.8,55.8 38.3,55.8 H 51 C 56,55.8 59.5,56.5 61,59 C 60,61.3 57,61.8 54,61.3 H 37 C 34.5,61.3 32.5,58.8 31.4,58.8 C 30.3,58.8 28.3,61.3 25.8,61.3 H 9 C 6,61.8 3.2,61.3 2.2,59 Z"/>
</g>
<path d="M31.4,17.7 V27.6 M26.6,22.3 H36.2" stroke="#000" stroke-width="1.4" fill="none"/><path d="M19,44.8 H44.5" stroke="#000" stroke-width="1.6"/></svg></div>
<div style="left:1759px;top:444px;width:64px;height:64px"><svg width="64" height="64" viewBox="7.73 8.97 30.3 31.5" preserveAspectRatio="none" style="overflow:visible"><path d="m 22.5,9 c -2.21,0 -4,1.79 -4,4 0,0.89 0.29,1.71 0.78,2.38 C 17.33,16.5 16,18.59 16,21 c 0,2.03 0.94,3.84 2.41,5.03 C 15.41,27.09 11,31.58 11,39.5 H 34 C 34,31.58 29.59,27.09 26.59,26.03 28.06,24.84 29,23.03 29,21 29,18.59 27.67,16.5 25.72,15.38 26.21,14.71 26.5,13.89 26.5,13 c 0,-2.21 -1.79,-4 -4,-4 z" fill="#fff" stroke="#000" stroke-width="0.8" stroke-linecap="round" stroke-linejoin="round"/></svg></div>
<div style="left:1759px;top:508px;width:64px;height:64px"><svg width="64" height="64" viewBox="5.7 6.65 33.2 33.5" preserveAspectRatio="none" style="overflow:visible"><g fill="#fff" stroke="#000" stroke-width="0.8" stroke-linecap="round" stroke-linejoin="round">
<path d="M 22,10 C 32.5,11 38.5,18 38,39 L 15,39 C 15,30 25,32.5 23,18"/>
<path d="M 24,18 C 24.38,20.91 18.45,25.37 16,27 C 13,29 13.18,31.34 11,31 C 9.958,30.06 12.41,27.96 11,28 C 10,28 11.19,29.23 10,30 C 9,30 5.997,31 6,26 C 6,24 12,14 12,14 C 12,14 13.89,12.1 14,10.5 C 13.27,9.506 13.5,8.5 13.5,7.5 C 14.5,6.5 16.5,10 16.5,10 L 18.5,10 C 18.5,10 19.28,8.008 21,7 C 22,7 22,10 22,10"/><rect x="8.3" y="24.6" width="1.6" height="1.4" rx="0.4" fill="#fff" stroke="#000" stroke-width="0.7"/><ellipse cx="14.5" cy="15.5" rx="0.9" ry="1.6" transform="rotate(30 14.5 15.5)" fill="#fff" stroke="#000" stroke-width="0.7"/></g></svg></div>
<div style="left:1823px;top:444px;width:64px;height:64px"><svg width="64" height="64" viewBox="7.73 8.97 30.3 31.5" preserveAspectRatio="none" style="overflow:visible"><path d="m 22.5,9 c -2.21,0 -4,1.79 -4,4 0,0.89 0.29,1.71 0.78,2.38 C 17.33,16.5 16,18.59 16,21 c 0,2.03 0.94,3.84 2.41,5.03 C 15.41,27.09 11,31.58 11,39.5 H 34 C 34,31.58 29.59,27.09 26.59,26.03 28.06,24.84 29,23.03 29,21 29,18.59 27.67,16.5 25.72,15.38 26.21,14.71 26.5,13.89 26.5,13 c 0,-2.21 -1.79,-4 -4,-4 z" fill="#fff" stroke="#000" stroke-width="0.8" stroke-linecap="round" stroke-linejoin="round"/></svg></div>
<div style="left:1823px;top:508px;width:64px;height:64px"><svg width="64" height="64" viewBox="0 0 64 64" style="overflow:visible"><g fill="#fff" stroke="#000" stroke-width="1.5" stroke-linejoin="miter"><path d="M7.7,12 V0.8 H17.8 V5 H27 V0.8 H36.4 V5 H45.9 V0.8 H55.7 V12 L50.4,17.5 H13.3 Z"/><path d="M13.3,17.5 H50.4 V42.4 H13.3 Z"/><path d="M13.3,42.4 H50.4 L53.5,47.6 H10.2 Z"/><path d="M10.2,47.6 H53.5 V54.2 H10.2 Z"/><path d="M3.3,54.2 H59.8 V62.2 H3.3 Z"/></g><path d="M7.7,12 H55.7" stroke="#000" stroke-width="1.5"/></svg></div>
<div class="win" style="left:27px;top:478px;width:487px;height:546px"></div>
<div style="left:31px;top:482px;width:480px;height:19px;background:linear-gradient(to right,#6e2209,#f4ca9e)"></div>
<div style="left:109px;top:484px;width:367px;height:15px;background:repeating-linear-gradient(to bottom,rgba(110,34,9,0.42) 0 1px,rgba(110,34,9,0.22) 1px 2px)"></div>
<div style="left:33px;top:484px;width:16px;height:16px"><svg width="16" height="16" viewBox="0 0 16 16"><rect x="0" y="1" width="3" height="3" fill="#0000ff"/><rect x="4" y="1" width="3" height="3" fill="#0000ff"/><rect x="9" y="1" width="3" height="3" fill="#0000ff"/><rect x="13" y="1" width="3" height="3" fill="#0000ff"/><rect x="0" y="5" width="3" height="3" fill="#00ff00"/><rect x="4" y="5" width="3" height="3" fill="#00ff00"/><rect x="9" y="5" width="3" height="3" fill="#00ff00"/><rect x="13" y="5" width="3" height="3" fill="#00ff00"/><rect x="2" y="9" width="2" height="2" fill="#f00"/><rect x="5" y="14" width="6" height="2" fill="#fff"/></svg></div>
<div style="left:52px;top:482px;height:20px;font:bold 12px 'Liberation Sans';line-height:20px;color:#ffffff;white-space:pre;transform:scaleX(1.019);transform-origin:0 0;text-shadow:1px 1px 0 #421405">Breakout</div>
<div class="btn" style="left:494px;top:484px"><svg width="15" height="15" viewBox="0 0 15 15"><path d="M4 4L10 10M10 4L4 10" stroke="#000" stroke-width="2" stroke-linecap="square"/></svg></div>
<div class="btn" style="left:479px;top:484px"><svg width="15" height="15" viewBox="0 0 15 15"><path d="M3.5 6L10.5 6L7 9.5Z" fill="#000" stroke="#000" stroke-width="0.6"/></svg></div>
<div style="left:38px;top:502px;height:20px;font:normal 12px 'Liberation Sans';line-height:20px;color:#000;white-space:pre;transform:scaleX(0.818);transform-origin:0 0;">Game</div>
<div style="left:78px;top:502px;height:20px;font:normal 12px 'Liberation Sans';line-height:20px;color:#000;white-space:pre;transform:scaleX(0.920);transform-origin:0 0;">Help</div>
<div style="left:31px;top:522px;width:480px;height:499px;background:#000;"></div>
<div style="left:61px;top:551px;width:40px;height:12px;background:#ff0000;"></div>
<div style="left:104px;top:551px;width:40px;height:12px;background:#ff0000;"></div>
<div style="left:147px;top:551px;width:40px;height:12px;background:#ff0000;"></div>
<div style="left:190px;top:551px;width:40px;height:12px;background:#ff0000;"></div>
<div style="left:233px;top:551px;width:40px;height:12px;background:#ff0000;"></div>
<div style="left:276px;top:551px;width:40px;height:12px;background:#ff0000;"></div>
<div style="left:319px;top:551px;width:40px;height:12px;background:#ff0000;"></div>
<div style="left:362px;top:551px;width:40px;height:12px;background:#ff0000;"></div>
<div style="left:405px;top:551px;width:40px;height:12px;background:#ff0000;"></div>
<div style="left:448px;top:551px;width:40px;height:12px;background:#ff0000;"></div>
<div style="left:61px;top:566px;width:40px;height:12px;background:#00ff00;"></div>
<div style="left:104px;top:566px;width:40px;height:12px;background:#00ff00;"></div>
<div style="left:147px;top:566px;width:40px;height:12px;background:#00ff00;"></div>
<div style="left:190px;top:566px;width:40px;height:12px;background:#00ff00;"></div>
<div style="left:233px;top:566px;width:40px;height:12px;background:#00ff00;"></div>
<div style="left:276px;top:566px;width:40px;height:12px;background:#00ff00;"></div>
<div style="left:319px;top:566px;width:40px;height:12px;background:#00ff00;"></div>
<div style="left:362px;top:566px;width:40px;height:12px;background:#00ff00;"></div>
<div style="left:405px;top:566px;width:40px;height:12px;background:#00ff00;"></div>
<div style="left:448px;top:566px;width:40px;height:12px;background:#00ff00;"></div>
<div style="left:61px;top:581px;width:40px;height:12px;background:#0000ff;"></div>
<div style="left:104px;top:581px;width:40px;height:12px;background:#0000ff;"></div>
<div style="left:147px;top:581px;width:40px;height:12px;background:#0000ff;"></div>
<div style="left:190px;top:581px;width:40px;height:12px;background:#0000ff;"></div>
<div style="left:233px;top:581px;width:40px;height:12px;background:#0000ff;"></div>
<div style="left:276px;top:581px;width:40px;height:12px;background:#0000ff;"></div>
<div style="left:319px;top:581px;width:40px;height:12px;background:#0000ff;"></div>
<div style="left:362px;top:581px;width:40px;height:12px;background:#0000ff;"></div>
<div style="left:405px;top:581px;width:40px;height:12px;background:#0000ff;"></div>
<div style="left:448px;top:581px;width:40px;height:12px;background:#0000ff;"></div>
<div style="left:61px;top:596px;width:40px;height:12px;background:#ffff00;"></div>
<div style="left:104px;top:596px;width:40px;height:12px;background:#ffff00;"></div>
<div style="left:147px;top:596px;width:40px;height:12px;background:#ffff00;"></div>
<div style="left:190px;top:596px;width:40px;height:12px;background:#ffff00;"></div>
<div style="left:233px;top:596px;width:40px;height:12px;background:#ffff00;"></div>
<div style="left:276px;top:596px;width:40px;height:12px;background:#ffff00;"></div>
<div style="left:319px;top:596px;width:40px;height:12px;background:#ffff00;"></div>
<div style="left:362px;top:596px;width:40px;height:12px;background:#ffff00;"></div>
<div style="left:405px;top:596px;width:40px;height:12px;background:#ffff00;"></div>
<div style="left:448px;top:596px;width:40px;height:12px;background:#ffff00;"></div>
<div style="left:61px;top:611px;width:40px;height:12px;background:#ff00ff;"></div>
<div style="left:104px;top:611px;width:40px;height:12px;background:#ff00ff;"></div>
<div style="left:147px;top:611px;width:40px;height:12px;background:#ff00ff;"></div>
<div style="left:190px;top:611px;width:40px;height:12px;background:#ff00ff;"></div>
<div style="left:233px;top:611px;width:40px;height:12px;background:#ff00ff;"></div>
<div style="left:276px;top:611px;width:40px;height:12px;background:#ff00ff;"></div>
<div style="left:319px;top:611px;width:40px;height:12px;background:#ff00ff;"></div>
<div style="left:362px;top:611px;width:40px;height:12px;background:#ff00ff;"></div>
<div style="left:405px;top:611px;width:40px;height:12px;background:#ff00ff;"></div>
<div style="left:448px;top:611px;width:40px;height:12px;background:#ff00ff;"></div>
<div style="left:61px;top:626px;width:40px;height:12px;background:#00ffff;"></div>
<div style="left:104px;top:626px;width:40px;height:12px;background:#00ffff;"></div>
<div style="left:147px;top:626px;width:40px;height:12px;background:#00ffff;"></div>
<div style="left:190px;top:626px;width:40px;height:12px;background:#00ffff;"></div>
<div style="left:233px;top:626px;width:40px;height:12px;background:#00ffff;"></div>
<div style="left:276px;top:626px;width:40px;height:12px;background:#00ffff;"></div>
<div style="left:319px;top:626px;width:40px;height:12px;background:#00ffff;"></div>
<div style="left:362px;top:626px;width:40px;height:12px;background:#00ffff;"></div>
<div style="left:61px;top:641px;width:40px;height:12px;background:#c0c0c0;"></div>
<div style="left:104px;top:641px;width:40px;height:12px;background:#c0c0c0;"></div>
<div style="left:147px;top:641px;width:40px;height:12px;background:#c0c0c0;"></div>
<div style="left:190px;top:641px;width:40px;height:12px;background:#c0c0c0;"></div>
<div style="left:233px;top:641px;width:40px;height:12px;background:#c0c0c0;"></div>
<div style="left:276px;top:641px;width:40px;height:12px;background:#c0c0c0;"></div>
<div style="left:319px;top:641px;width:40px;height:12px;background:#c0c0c0;"></div>
<div style="left:468px;top:518px;height:20px;font:normal 11px 'Liberation Sans';line-height:20px;color:#f0f0f0;white-space:pre;transform:scaleX(1.085);transform-origin:0 0;">Lives: 3</div>
<div style="left:421px;top:903px;width:16px;height:16px;border-radius:50%;background:#f00"></div>
<div style="left:357px;top:1001px;width:80px;height:16px;background:#fff;"></div>
<div class="win" style="left:578px;top:480px;width:647px;height:526px"></div>
<div style="left:582px;top:484px;width:640px;height:19px;background:linear-gradient(to right,#808080,#c0c0c0)"></div>
<div style="left:722px;top:486px;width:465px;height:15px;background:repeating-linear-gradient(to bottom,rgba(128,128,128,0.8) 0 1px,transparent 1px 2px)"></div>
<div style="left:584px;top:486px;width:16px;height:16px"><svg width="16" height="16" viewBox="0 0 16 16"><path d="M3,4 L11,2 L14,4 V14 L6,16 L3,14 Z" fill="#2850a8" stroke="#102060" stroke-width="0.8"/><path d="M4,4 L11,2.5 L13,4 L6,5.5 Z" fill="#eee"/><rect x="8" y="3" width="2" height="1" fill="#d00"/></svg></div>
<div style="left:603px;top:484px;height:20px;font:bold 12px 'Liberation Sans';line-height:20px;color:#d5d0c7;white-space:pre;transform:scaleX(1.088);transform-origin:0 0;text-shadow:1px 1px 0 #4c4c4c">Score: 0 - Solitaire</div>
<div class="btn" style="left:1205px;top:486px"><svg width="15" height="15" viewBox="0 0 15 15"><path d="M4 4L10 10M10 4L4 10" stroke="#000" stroke-width="2" stroke-linecap="square"/></svg></div>
<div class="btn" style="left:1190px;top:486px"><svg width="15" height="15" viewBox="0 0 15 15"><path d="M3.5 6L10.5 6L7 9.5Z" fill="#000" stroke="#000" stroke-width="0.6"/></svg></div>
<div style="left:589px;top:504px;height:20px;font:normal 12px 'Liberation Sans';line-height:20px;color:#000;white-space:pre;transform:scaleX(0.818);transform-origin:0 0;">Game</div>
<div style="left:629px;top:504px;height:20px;font:normal 12px 'Liberation Sans';line-height:20px;color:#000;white-space:pre;transform:scaleX(0.920);transform-origin:0 0;">Help</div>
<div style="left:582px;top:524px;width:640px;height:479px;background:#008000;"></div>
<div style="left:593px;top:533px;width:80px;height:100px;background:#fff;border:1px solid #000;border-left-color:#555;border-radius:2px"></div>
<div style="left:595px;top:534px;width:80px;height:100px;background:#fff;border:1px solid #000;border-left-color:#555;border-radius:2px"></div>
<div style="left:597px;top:535px;width:80px;height:100px;background:#fff;border:1px solid #000;border-left-color:#555;border-radius:2px"></div>
<div style="left:597px;top:535px;width:80px;height:100px"><svg width="80" height="100" viewBox="0 0 80 100">
<ellipse cx="44" cy="62" rx="15" ry="23" fill="#a00000" stroke="#111" stroke-width="1.5"/>
<circle cx="54" cy="52" r="3" fill="#111"/><circle cx="55" cy="75" r="3" fill="#111"/>
<ellipse cx="38" cy="63" rx="14" ry="21" fill="#98b8c8" stroke="#1a1a1a" stroke-width="1.2"/>
<ellipse cx="37" cy="63" rx="9" ry="17" fill="#222a30"/>
<path d="M29,52 L22,58 M45,52 L51,58 M28,64 L24,70 M46,64 L50,70" stroke="#111" stroke-width="3" stroke-linecap="round"/>
<rect x="31" y="80" width="5" height="10" fill="#1a1a1a"/><rect x="37" y="80" width="5" height="10" fill="#1a1a1a"/>
<ellipse cx="33" cy="89" rx="5" ry="3" fill="#1a1a1a"/><ellipse cx="40" cy="90" rx="5" ry="3" fill="#1a1a1a"/>
<ellipse cx="37" cy="37" rx="14" ry="15" fill="#1e2226"/>
<ellipse cx="32" cy="33" rx="7" ry="10" fill="#fff" stroke="#222" stroke-width="1"/>
<ellipse cx="41" cy="34" rx="7" ry="10" fill="#fff" stroke="#222" stroke-width="1"/>
<circle cx="31" cy="35" r="1" fill="#333"/><circle cx="40" cy="36" r="1" fill="#333"/>
<ellipse cx="38" cy="47" rx="5" ry="2.5" fill="#f7a0d0"/>
<path d="M32,24 C 30,16 24,18 25,13 C 26,9 32,11 29,15 M42,24 C 44,16 50,18 49,13 C 48,9 42,11 45,15" fill="none" stroke="#333" stroke-width="1.5"/>
</svg></div>
<div style="left:682px;top:533px;width:80px;height:100px;border:1px solid #004d00"></div>
<svg style="left:0;top:0" width="0" height="0"><defs><pattern id="fdots" x="0" y="0" width="5" height="8" patternUnits="userSpaceOnUse"><rect x="3" y="4" width="1" height="2" fill="#005400"/></pattern></defs></svg>
<div style="left:862px;top:533px;width:80px;height:100px;border:1px solid #004d00"><svg style="left:0;top:0" width="78" height="98"><rect x="0" y="0" width="76" height="94" fill="url(#fdots)"/></svg></div>
<div style="left:952px;top:533px;width:80px;height:100px;border:1px solid #004d00"><svg style="left:0;top:0" width="78" height="98"><rect x="0" y="0" width="76" height="94" fill="url(#fdots)"/></svg></div>
<div style="left:1042px;top:533px;width:80px;height:100px;border:1px solid #004d00"><svg style="left:0;top:0" width="78" height="98"><rect x="0" y="0" width="76" height="94" fill="url(#fdots)"/></svg></div>
<div style="left:1132px;top:533px;width:80px;height:100px;border:1px solid #004d00"><svg style="left:0;top:0" width="78" height="98"><rect x="0" y="0" width="76" height="94" fill="url(#fdots)"/></svg></div>
<div style="left:592px;top:643px;width:80px;height:100px;background:#fff;border:1px solid #000;border-radius:2px"></div>
<div style="left:596px;top:643px;width:10px;height:16px;font:bold 12px 'Liberation Sans';line-height:16px;color:#ff0000">8</div>
<div style="left:596px;top:660px;width:9px;height:9px"><svg width="9" height="9" viewBox="0 0 9 9" fill="#ff0000"><path d="M4.5,0 L8.8,4.5 L4.5,9 L0.2,4.5 Z"/></svg></div>
<div style="left:659px;top:727px;width:10px;height:16px;font:bold 12px 'Liberation Sans';line-height:16px;color:#ff0000;transform:rotate(180deg)">8</div>
<div style="left:659px;top:718px;width:9px;height:9px;transform:rotate(180deg)"><svg width="9" height="9" viewBox="0 0 9 9" fill="#ff0000"><path d="M4.5,0 L8.8,4.5 L4.5,9 L0.2,4.5 Z"/></svg></div>
<div style="left:682px;top:643px;width:80px;height:100px;background:#fff;border:1px solid #000;border-radius:2px"></div>
<div style="left:682px;top:646px;width:80px;height:100px;background:#fff;border:1px solid #000;border-radius:2px"></div>
<div style="left:686px;top:646px;width:10px;height:16px;font:bold 12px 'Liberation Sans';line-height:16px;color:#000000">3</div>
<div style="left:686px;top:663px;width:9px;height:9px"><svg width="9" height="9" viewBox="0 0 9 9" fill="#000000"><path d="M4.5,0 C 5.8,2 9,3.8 9,5.8 C 9,7.2 8.1,8 7,8 C 6.1,8 5.4,7.5 5,6.8 L5.6,9 H3.4 L4,6.8 C 3.6,7.5 2.9,8 2,8 C 0.9,8 0,7.2 0,5.8 C 0,3.8 3.2,2 4.5,0 Z"/></svg></div>
<div style="left:749px;top:730px;width:10px;height:16px;font:bold 12px 'Liberation Sans';line-height:16px;color:#000000;transform:rotate(180deg)">3</div>
<div style="left:749px;top:721px;width:9px;height:9px;transform:rotate(180deg)"><svg width="9" height="9" viewBox="0 0 9 9" fill="#000000"><path d="M4.5,0 C 5.8,2 9,3.8 9,5.8 C 9,7.2 8.1,8 7,8 C 6.1,8 5.4,7.5 5,6.8 L5.6,9 H3.4 L4,6.8 C 3.6,7.5 2.9,8 2,8 C 0.9,8 0,7.2 0,5.8 C 0,3.8 3.2,2 4.5,0 Z"/></svg></div>
<div style="left:772px;top:643px;width:80px;height:100px;background:#fff;border:1px solid #000;border-radius:2px"></div>
<div style="left:772px;top:646px;width:80px;height:100px;background:#fff;border:1px solid #000;border-radius:2px"></div>
<div style="left:772px;top:649px;width:80px;height:100px;background:#fff;border:1px solid #000;border-radius:2px"></div>
<div style="left:776px;top:649px;width:10px;height:16px;font:bold 12px 'Liberation Sans';line-height:16px;color:#000000">2</div>
<div style="left:776px;top:666px;width:9px;height:9px"><svg width="9" height="9" viewBox="0 0 9 9" fill="#000000"><path d="M4.5,0 C 5.8,2 9,3.8 9,5.8 C 9,7.2 8.1,8 7,8 C 6.1,8 5.4,7.5 5,6.8 L5.6,9 H3.4 L4,6.8 C 3.6,7.5 2.9,8 2,8 C 0.9,8 0,7.2 0,5.8 C 0,3.8 3.2,2 4.5,0 Z"/></svg></div>
<div style="left:839px;top:733px;width:10px;height:16px;font:bold 12px 'Liberation Sans';line-height:16px;color:#000000;transform:rotate(180deg)">2</div>
<div style="left:839px;top:724px;width:9px;height:9px;transform:rotate(180deg)"><svg width="9" height="9" viewBox="0 0 9 9" fill="#000000"><path d="M4.5,0 C 5.8,2 9,3.8 9,5.8 C 9,7.2 8.1,8 7,8 C 6.1,8 5.4,7.5 5,6.8 L5.6,9 H3.4 L4,6.8 C 3.6,7.5 2.9,8 2,8 C 0.9,8 0,7.2 0,5.8 C 0,3.8 3.2,2 4.5,0 Z"/></svg></div>
<div style="left:862px;top:643px;width:80px;height:100px;background:#fff;border:1px solid #000;border-radius:2px"></div>
<div style="left:862px;top:646px;width:80px;height:100px;background:#fff;border:1px solid #000;border-radius:2px"></div>
<div style="left:862px;top:649px;width:80px;height:100px;background:#fff;border:1px solid #000;border-radius:2px"></div>
<div style="left:862px;top:652px;width:80px;height:100px;background:#fff;border:1px solid #000;border-radius:2px"></div>
<div style="left:866px;top:652px;width:10px;height:16px;font:bold 12px 'Liberation Sans';line-height:16px;color:#ff0000">K</div>
<div style="left:866px;top:669px;width:9px;height:9px"><svg width="9" height="9" viewBox="0 0 9 9" fill="#ff0000"><path d="M4.5,0 L8.8,4.5 L4.5,9 L0.2,4.5 Z"/></svg></div>
<div style="left:929px;top:736px;width:10px;height:16px;font:bold 12px 'Liberation Sans';line-height:16px;color:#ff0000;transform:rotate(180deg)">K</div>
<div style="left:929px;top:727px;width:9px;height:9px;transform:rotate(180deg)"><svg width="9" height="9" viewBox="0 0 9 9" fill="#ff0000"><path d="M4.5,0 L8.8,4.5 L4.5,9 L0.2,4.5 Z"/></svg></div>
<div style="left:952px;top:643px;width:80px;height:100px;background:#fff;border:1px solid #000;border-radius:2px"></div>
<div style="left:952px;top:646px;width:80px;height:100px;background:#fff;border:1px solid #000;border-radius:2px"></div>
<div style="left:952px;top:649px;width:80px;height:100px;background:#fff;border:1px solid #000;border-radius:2px"></div>
<div style="left:952px;top:652px;width:80px;height:100px;background:#fff;border:1px solid #000;border-radius:2px"></div>
<div style="left:952px;top:655px;width:80px;height:100px;background:#fff;border:1px solid #000;border-radius:2px"></div>
<div style="left:956px;top:655px;width:10px;height:16px;font:bold 12px 'Liberation Sans';line-height:16px;color:#000000">5</div>
<div style="left:956px;top:672px;width:9px;height:9px"><svg width="9" height="9" viewBox="0 0 9 9" fill="#000000"><circle cx="4.5" cy="2.2" r="2.2"/><circle cx="2.2" cy="5.6" r="2.2"/><circle cx="6.8" cy="5.6" r="2.2"/><path d="M4,5 H5 L5.7,9 H3.3 Z"/></svg></div>
<div style="left:1019px;top:739px;width:10px;height:16px;font:bold 12px 'Liberation Sans';line-height:16px;color:#000000;transform:rotate(180deg)">5</div>
<div style="left:1019px;top:730px;width:9px;height:9px;transform:rotate(180deg)"><svg width="9" height="9" viewBox="0 0 9 9" fill="#000000"><circle cx="4.5" cy="2.2" r="2.2"/><circle cx="2.2" cy="5.6" r="2.2"/><circle cx="6.8" cy="5.6" r="2.2"/><path d="M4,5 H5 L5.7,9 H3.3 Z"/></svg></div>
<div style="left:1042px;top:643px;width:80px;height:100px;background:#fff;border:1px solid #000;border-radius:2px"></div>
<div style="left:1042px;top:646px;width:80px;height:100px;background:#fff;border:1px solid #000;border-radius:2px"></div>
<div style="left:1042px;top:649px;width:80px;height:100px;background:#fff;border:1px solid #000;border-radius:2px"></div>
<div style="left:1042px;top:652px;width:80px;height:100px;background:#fff;border:1px solid #000;border-radius:2px"></div>
<div style="left:1042px;top:655px;width:80px;height:100px;background:#fff;border:1px solid #000;border-radius:2px"></div>
<div style="left:1042px;top:658px;width:80px;height:100px;background:#fff;border:1px solid #000;border-radius:2px"></div>
<div style="left:1046px;top:658px;width:10px;height:16px;font:bold 12px 'Liberation Sans';line-height:16px;color:#ff0000">4</div>
<div style="left:1046px;top:675px;width:9px;height:9px"><svg width="9" height="9" viewBox="0 0 9 9" fill="#ff0000"><path d="M4.5,9 C 2,6.8 0,5 0,2.7 C 0,1 1.1,0 2.4,0 C 3.5,0 4.2,0.8 4.5,1.7 C 4.8,0.8 5.5,0 6.6,0 C 7.9,0 9,1 9,2.7 C 9,5 7,6.8 4.5,9 Z"/></svg></div>
<div style="left:1109px;top:742px;width:10px;height:16px;font:bold 12px 'Liberation Sans';line-height:16px;color:#ff0000;transform:rotate(180deg)">4</div>
<div style="left:1109px;top:733px;width:9px;height:9px;transform:rotate(180deg)"><svg width="9" height="9" viewBox="0 0 9 9" fill="#ff0000"><path d="M4.5,9 C 2,6.8 0,5 0,2.7 C 0,1 1.1,0 2.4,0 C 3.5,0 4.2,0.8 4.5,1.7 C 4.8,0.8 5.5,0 6.6,0 C 7.9,0 9,1 9,2.7 C 9,5 7,6.8 4.5,9 Z"/></svg></div>
<div style="left:1132px;top:643px;width:80px;height:100px;background:#fff;border:1px solid #000;border-radius:2px"></div>
<div style="left:1132px;top:646px;width:80px;height:100px;background:#fff;border:1px solid #000;border-radius:2px"></div>
<div style="left:1132px;top:649px;width:80px;height:100px;background:#fff;border:1px solid #000;border-radius:2px"></div>
<div style="left:1132px;top:652px;width:80px;height:100px;background:#fff;border:1px solid #000;border-radius:2px"></div>
<div style="left:1132px;top:655px;width:80px;height:100px;background:#fff;border:1px solid #000;border-radius:2px"></div>
<div style="left:1132px;top:658px;width:80px;height:100px;background:#fff;border:1px solid #000;border-radius:2px"></div>
<div style="left:1132px;top:661px;width:80px;height:100px;background:#fff;border:1px solid #000;border-radius:2px"></div>
<div style="left:1136px;top:661px;width:10px;height:16px;font:bold 12px 'Liberation Sans';line-height:16px;color:#ff0000">7</div>
<div style="left:1136px;top:678px;width:9px;height:9px"><svg width="9" height="9" viewBox="0 0 9 9" fill="#ff0000"><path d="M4.5,9 C 2,6.8 0,5 0,2.7 C 0,1 1.1,0 2.4,0 C 3.5,0 4.2,0.8 4.5,1.7 C 4.8,0.8 5.5,0 6.6,0 C 7.9,0 9,1 9,2.7 C 9,5 7,6.8 4.5,9 Z"/></svg></div>
<div style="left:1199px;top:745px;width:10px;height:16px;font:bold 12px 'Liberation Sans';line-height:16px;color:#ff0000;transform:rotate(180deg)">7</div>
<div style="left:1199px;top:736px;width:9px;height:9px;transform:rotate(180deg)"><svg width="9" height="9" viewBox="0 0 9 9" fill="#ff0000"><path d="M4.5,9 C 2,6.8 0,5 0,2.7 C 0,1 1.1,0 2.4,0 C 3.5,0 4.2,0.8 4.5,1.7 C 4.8,0.8 5.5,0 6.6,0 C 7.9,0 9,1 9,2.7 C 9,5 7,6.8 4.5,9 Z"/></svg></div>
<div class="win" style="left:1301px;top:631px;width:146px;height:222px"></div>
<div style="left:1305px;top:635px;width:139px;height:19px;background:linear-gradient(to right,#808080,#c0c0c0)"></div>
<div style="left:1405px;top:637px;width:4px;height:15px;background:repeating-linear-gradient(to bottom,rgba(128,128,128,0.8) 0 1px,transparent 1px 2px)"></div>
<div style="left:1307px;top:637px;width:16px;height:16px"><svg width="16" height="16" viewBox="0 0 16 16"><path d="M8,0 V16 M0,8 H16 M2.5,2.5 L13.5,13.5 M13.5,2.5 L2.5,13.5" stroke="#000" stroke-width="1.2"/><circle cx="8" cy="8" r="5" fill="#000"/><circle cx="6.5" cy="6.5" r="1.3" fill="#fff"/></svg></div>
<div style="left:1326px;top:635px;height:20px;font:bold 12px 'Liberation Sans';line-height:20px;color:#d5d0c7;white-space:pre;transform:scaleX(0.991);transform-origin:0 0;text-shadow:1px 1px 0 #4c4c4c">Minesweeper</div>
<div class="btn" style="left:1427px;top:637px"><svg width="15" height="15" viewBox="0 0 15 15"><path d="M4 4L10 10M10 4L4 10" stroke="#000" stroke-width="2" stroke-linecap="square"/></svg></div>
<div class="btn" style="left:1412px;top:637px"><svg width="15" height="15" viewBox="0 0 15 15"><path d="M3.5 6L10.5 6L7 9.5Z" fill="#000" stroke="#000" stroke-width="0.6"/></svg></div>
<div style="left:1311px;top:656px;height:20px;font:normal 12px 'Liberation Sans';line-height:20px;color:#000;white-space:pre;transform:scaleX(0.818);transform-origin:0 0;">Game</div>
<div style="left:1351px;top:656px;height:20px;font:normal 12px 'Liberation Sans';line-height:20px;color:#000;white-space:pre;transform:scaleX(1.152);transform-origin:0 0;">Difficulty</div>
<div style="left:1416px;top:656px;height:20px;font:normal 12px 'Liberation Sans';line-height:20px;color:#000;white-space:pre;transform:scaleX(0.920);transform-origin:0 0;">Help</div>
<svg style="left:1306px;top:685px" width="16" height="16" viewBox="0 0 16 16"><rect x="5" y="2" width="1" height="12" fill="#000"/><rect x="6" y="2" width="8" height="6" fill="#2a5ab8"/><rect x="6" y="4" width="8" height="1.6" fill="#f0d000"/><rect x="8.5" y="2" width="1.6" height="6" fill="#f0d000"/><path d="M1,15 C 3,13 8,13 10,15 Z" fill="#000"/></svg>
<svg style="left:1362px;top:681px" width="24" height="23" viewBox="0 0 24 23"><circle cx="12" cy="11.5" r="11" fill="#f5c800" stroke="#222" stroke-width="1"/><path d="M6,13 C 8,17.5 16,17.5 18,13" fill="none" stroke="#222" stroke-width="1.6"/><path d="M7,9 C 8,7.5 10,7.5 10.5,9 M13.5,9 C 14,7.5 16,7.5 17,9" fill="none" stroke="#333" stroke-width="1.2"/></svg>
<svg style="left:1395px;top:685px" width="15" height="16" viewBox="0 0 15 16"><rect x="6" y="0" width="3" height="2" fill="#111"/><circle cx="7.5" cy="9" r="6" fill="#d8d8d8" stroke="#333" stroke-width="1"/><path d="M7.5,9 L11,6.5" stroke="#d02020" stroke-width="1"/></svg>
<div style="left:1304px;top:709px;width:139px;height:139px;box-shadow:inset 2px 2px #808080,inset -2px -2px #ffffff"></div>
<div style="left:1306px;top:711px;width:15px;height:15px;background:#d4d0c8;box-shadow:inset 1px 1px #ffffff,inset -1px -1px #505050,inset -2px -2px #808080"></div>
<div style="left:1321px;top:711px;width:15px;height:15px;background:#d4d0c8;box-shadow:inset 1px 1px #ffffff,inset -1px -1px #505050,inset -2px -2px #808080"></div>
<div style="left:1336px;top:711px;width:15px;height:15px;background:#d4d0c8;box-shadow:inset 1px 1px #ffffff,inset -1px -1px #505050,inset -2px -2px #808080"></div>
<div style="left:1351px;top:711px;width:15px;height:15px;background:#d4d0c8;box-shadow:inset 1px 1px #ffffff,inset -1px -1px #505050,inset -2px -2px #808080"></div>
<div style="left:1366px;top:711px;width:15px;height:15px;background:#d4d0c8;box-shadow:inset 1px 1px #ffffff,inset -1px -1px #505050,inset -2px -2px #808080"></div>
<div style="left:1381px;top:711px;width:15px;height:15px;background:#d4d0c8;box-shadow:inset 1px 1px #ffffff,inset -1px -1px #505050,inset -2px -2px #808080"></div>
<div style="left:1396px;top:711px;width:15px;height:15px;background:#d4d0c8;box-shadow:inset 1px 1px #ffffff,inset -1px -1px #505050,inset -2px -2px #808080"></div>
<div style="left:1411px;top:711px;width:15px;height:15px;background:#d4d0c8;box-shadow:inset -1px -1px #8a8a8a"></div>
<div style="left:1411px;top:710px;width:15px;height:20px;text-align:center;font:bold 17px 'Liberation Mono';line-height:20px;color:#003488;transform:scaleY(1.22);transform-origin:50% 3px">1</div>
<div style="left:1426px;top:711px;width:15px;height:15px;background:#d4d0c8;box-shadow:inset -1px -1px #8a8a8a"></div>
<div style="left:1306px;top:726px;width:15px;height:15px;background:#d4d0c8;box-shadow:inset 1px 1px #ffffff,inset -1px -1px #505050,inset -2px -2px #808080"></div>
<div style="left:1321px;top:726px;width:15px;height:15px;background:#d4d0c8;box-shadow:inset 1px 1px #ffffff,inset -1px -1px #505050,inset -2px -2px #808080"></div>
<div style="left:1336px;top:726px;width:15px;height:15px;background:#d4d0c8;box-shadow:inset 1px 1px #ffffff,inset -1px -1px #505050,inset -2px -2px #808080"></div>
<div style="left:1351px;top:726px;width:15px;height:15px;background:#d4d0c8;box-shadow:inset 1px 1px #ffffff,inset -1px -1px #505050,inset -2px -2px #808080"></div>
<div style="left:1366px;top:726px;width:15px;height:15px;background:#d4d0c8;box-shadow:inset 1px 1px #ffffff,inset -1px -1px #505050,inset -2px -2px #808080"></div>
<div style="left:1381px;top:726px;width:15px;height:15px;background:#d4d0c8;box-shadow:inset 1px 1px #ffffff,inset -1px -1px #505050,inset -2px -2px #808080"></div>
<div style="left:1396px;top:726px;width:15px;height:15px;background:#d4d0c8;box-shadow:inset 1px 1px #ffffff,inset -1px -1px #505050,inset -2px -2px #808080"></div>
<div style="left:1411px;top:726px;width:15px;height:15px;background:#d4d0c8;box-shadow:inset -1px -1px #8a8a8a"></div>
<div style="left:1411px;top:725px;width:15px;height:20px;text-align:center;font:bold 17px 'Liberation Mono';line-height:20px;color:#007a3a;transform:scaleY(1.22);transform-origin:50% 3px">2</div>
<div style="left:1426px;top:726px;width:15px;height:15px;background:#d4d0c8;box-shadow:inset -1px -1px #8a8a8a"></div>
<div style="left:1306px;top:741px;width:15px;height:15px;background:#d4d0c8;box-shadow:inset 1px 1px #ffffff,inset -1px -1px #505050,inset -2px -2px #808080"></div>
<div style="left:1321px;top:741px;width:15px;height:15px;background:#d4d0c8;box-shadow:inset 1px 1px #ffffff,inset -1px -1px #505050,inset -2px -2px #808080"></div>
<div style="left:1336px;top:741px;width:15px;height:15px;background:#d4d0c8;box-shadow:inset 1px 1px #ffffff,inset -1px -1px #505050,inset -2px -2px #808080"></div>
<div style="left:1351px;top:741px;width:15px;height:15px;background:#d4d0c8;box-shadow:inset 1px 1px #ffffff,inset -1px -1px #505050,inset -2px -2px #808080"></div>
<div style="left:1366px;top:741px;width:15px;height:15px;background:#d4d0c8;box-shadow:inset 1px 1px #ffffff,inset -1px -1px #505050,inset -2px -2px #808080"></div>
<div style="left:1381px;top:741px;width:15px;height:15px;background:#d4d0c8;box-shadow:inset 1px 1px #ffffff,inset -1px -1px #505050,inset -2px -2px #808080"></div>
<div style="left:1396px;top:741px;width:15px;height:15px;background:#d4d0c8;box-shadow:inset 1px 1px #ffffff,inset -1px -1px #505050,inset -2px -2px #808080"></div>
<div style="left:1411px;top:741px;width:15px;height:15px;background:#d4d0c8;box-shadow:inset -1px -1px #8a8a8a"></div>
<div style="left:1411px;top:740px;width:15px;height:20px;text-align:center;font:bold 17px 'Liberation Mono';line-height:20px;color:#007a3a;transform:scaleY(1.22);transform-origin:50% 3px">2</div>
<div style="left:1426px;top:741px;width:15px;height:15px;background:#d4d0c8;box-shadow:inset -1px -1px #8a8a8a"></div>
<div style="left:1306px;top:756px;width:15px;height:15px;background:#d4d0c8;box-shadow:inset 1px 1px #ffffff,inset -1px -1px #505050,inset -2px -2px #808080"></div>
<div style="left:1321px;top:756px;width:15px;height:15px;background:#d4d0c8;box-shadow:inset 1px 1px #ffffff,inset -1px -1px #505050,inset -2px -2px #808080"></div>
<div style="left:1336px;top:756px;width:15px;height:15px;background:#d4d0c8;box-shadow:inset 1px 1px #ffffff,inset -1px -1px #505050,inset -2px -2px #808080"></div>
<div style="left:1351px;top:756px;width:15px;height:15px;background:#d4d0c8;box-shadow:inset 1px 1px #ffffff,inset -1px -1px #505050,inset -2px -2px #808080"></div>
<div style="left:1366px;top:756px;width:15px;height:15px;background:#d4d0c8;box-shadow:inset -1px -1px #8a8a8a"></div>
<div style="left:1366px;top:755px;width:15px;height:20px;text-align:center;font:bold 17px 'Liberation Mono';line-height:20px;color:#003488;transform:scaleY(1.22);transform-origin:50% 3px">1</div>
<div style="left:1381px;top:756px;width:15px;height:15px;background:#d4d0c8;box-shadow:inset -1px -1px #8a8a8a"></div>
<div style="left:1381px;top:755px;width:15px;height:20px;text-align:center;font:bold 17px 'Liberation Mono';line-height:20px;color:#003488;transform:scaleY(1.22);transform-origin:50% 3px">1</div>
<div style="left:1396px;top:756px;width:15px;height:15px;background:#d4d0c8;box-shadow:inset -1px -1px #8a8a8a"></div>
<div style="left:1396px;top:755px;width:15px;height:20px;text-align:center;font:bold 17px 'Liberation Mono';line-height:20px;color:#003488;transform:scaleY(1.22);transform-origin:50% 3px">1</div>
<div style="left:1411px;top:756px;width:15px;height:15px;background:#d4d0c8;box-shadow:inset -1px -1px #8a8a8a"></div>
<div style="left:1411px;top:755px;width:15px;height:20px;text-align:center;font:bold 17px 'Liberation Mono';line-height:20px;color:#003488;transform:scaleY(1.22);transform-origin:50% 3px">1</div>
<div style="left:1426px;top:756px;width:15px;height:15px;background:#d4d0c8;box-shadow:inset -1px -1px #8a8a8a"></div>
<div style="left:1306px;top:771px;width:15px;height:15px;background:#d4d0c8;box-shadow:inset 1px 1px #ffffff,inset -1px -1px #505050,inset -2px -2px #808080"></div>
<div style="left:1321px;top:771px;width:15px;height:15px;background:#d4d0c8;box-shadow:inset 1px 1px #ffffff,inset -1px -1px #505050,inset -2px -2px #808080"></div>
<div style="left:1336px;top:771px;width:15px;height:15px;background:#d4d0c8;box-shadow:inset 1px 1px #ffffff,inset -1px -1px #505050,inset -2px -2px #808080"></div>
<div style="left:1351px;top:771px;width:15px;height:15px;background:#d4d0c8;box-shadow:inset 1px 1px #ffffff,inset -1px -1px #505050,inset -2px -2px #808080"></div>
<div style="left:1366px;top:771px;width:15px;height:15px;background:#d4d0c8;box-shadow:inset -1px -1px #8a8a8a"></div>
<div style="left:1366px;top:770px;width:15px;height:20px;text-align:center;font:bold 17px 'Liberation Mono';line-height:20px;color:#003488;transform:scaleY(1.22);transform-origin:50% 3px">1</div>
<div style="left:1381px;top:771px;width:15px;height:15px;background:#d4d0c8;box-shadow:inset -1px -1px #8a8a8a"></div>
<div style="left:1396px;top:771px;width:15px;height:15px;background:#d4d0c8;box-shadow:inset -1px -1px #8a8a8a"></div>
<div style="left:1411px;top:771px;width:15px;height:15px;background:#d4d0c8;box-shadow:inset -1px -1px #8a8a8a"></div>
<div style="left:1426px;top:771px;width:15px;height:15px;background:#d4d0c8;box-shadow:inset -1px -1px #8a8a8a"></div>
<div style="left:1306px;top:786px;width:15px;height:15px;background:#d4d0c8;box-shadow:inset 1px 1px #ffffff,inset -1px -1px #505050,inset -2px -2px #808080"></div>
<div style="left:1321px;top:786px;width:15px;height:15px;background:#d4d0c8;box-shadow:inset 1px 1px #ffffff,inset -1px -1px #505050,inset -2px -2px #808080"></div>
<div style="left:1336px;top:786px;width:15px;height:15px;background:#d4d0c8;box-shadow:inset 1px 1px #ffffff,inset -1px -1px #505050,inset -2px -2px #808080"></div>
<div style="left:1351px;top:786px;width:15px;height:15px;background:#d4d0c8;box-shadow:inset 1px 1px #ffffff,inset -1px -1px #505050,inset -2px -2px #808080"></div>
<div style="left:1366px;top:786px;width:15px;height:15px;background:#d4d0c8;box-shadow:inset -1px -1px #8a8a8a"></div>
<div style="left:1366px;top:785px;width:15px;height:20px;text-align:center;font:bold 17px 'Liberation Mono';line-height:20px;color:#003488;transform:scaleY(1.22);transform-origin:50% 3px">1</div>
<div style="left:1381px;top:786px;width:15px;height:15px;background:#d4d0c8;box-shadow:inset -1px -1px #8a8a8a"></div>
<div style="left:1396px;top:786px;width:15px;height:15px;background:#d4d0c8;box-shadow:inset -1px -1px #8a8a8a"></div>
<div style="left:1411px;top:786px;width:15px;height:15px;background:#d4d0c8;box-shadow:inset -1px -1px #8a8a8a"></div>
<div style="left:1426px;top:786px;width:15px;height:15px;background:#d4d0c8;box-shadow:inset -1px -1px #8a8a8a"></div>
<div style="left:1306px;top:801px;width:15px;height:15px;background:#d4d0c8;box-shadow:inset 1px 1px #ffffff,inset -1px -1px #505050,inset -2px -2px #808080"></div>
<div style="left:1321px;top:801px;width:15px;height:15px;background:#d4d0c8;box-shadow:inset 1px 1px #ffffff,inset -1px -1px #505050,inset -2px -2px #808080"></div>
<div style="left:1336px;top:801px;width:15px;height:15px;background:#d4d0c8;box-shadow:inset 1px 1px #ffffff,inset -1px -1px #505050,inset -2px -2px #808080"></div>
<div style="left:1351px;top:801px;width:15px;height:15px;background:#d4d0c8;box-shadow:inset 1px 1px #ffffff,inset -1px -1px #505050,inset -2px -2px #808080"></div>
<div style="left:1366px;top:801px;width:15px;height:15px;background:#d4d0c8;box-shadow:inset -1px -1px #8a8a8a"></div>
<div style="left:1366px;top:800px;width:15px;height:20px;text-align:center;font:bold 17px 'Liberation Mono';line-height:20px;color:#007a3a;transform:scaleY(1.22);transform-origin:50% 3px">2</div>
<div style="left:1381px;top:801px;width:15px;height:15px;background:#d4d0c8;box-shadow:inset -1px -1px #8a8a8a"></div>
<div style="left:1381px;top:800px;width:15px;height:20px;text-align:center;font:bold 17px 'Liberation Mono';line-height:20px;color:#007a3a;transform:scaleY(1.22);transform-origin:50% 3px">2</div>
<div style="left:1396px;top:801px;width:15px;height:15px;background:#d4d0c8;box-shadow:inset -1px -1px #8a8a8a"></div>
<div style="left:1396px;top:800px;width:15px;height:20px;text-align:center;font:bold 17px 'Liberation Mono';line-height:20px;color:#003488;transform:scaleY(1.22);transform-origin:50% 3px">1</div>
<div style="left:1411px;top:801px;width:15px;height:15px;background:#d4d0c8;box-shadow:inset -1px -1px #8a8a8a"></div>
<div style="left:1426px;top:801px;width:15px;height:15px;background:#d4d0c8;box-shadow:inset -1px -1px #8a8a8a"></div>
<div style="left:1306px;top:816px;width:15px;height:15px;background:#d4d0c8;box-shadow:inset 1px 1px #ffffff,inset -1px -1px #505050,inset -2px -2px #808080"></div>
<div style="left:1321px;top:816px;width:15px;height:15px;background:#d4d0c8;box-shadow:inset 1px 1px #ffffff,inset -1px -1px #505050,inset -2px -2px #808080"></div>
<div style="left:1336px;top:816px;width:15px;height:15px;background:#d4d0c8;box-shadow:inset 1px 1px #ffffff,inset -1px -1px #505050,inset -2px -2px #808080"></div>
<div style="left:1351px;top:816px;width:15px;height:15px;background:#d4d0c8;box-shadow:inset 1px 1px #ffffff,inset -1px -1px #505050,inset -2px -2px #808080"></div>
<div style="left:1366px;top:816px;width:15px;height:15px;background:#d4d0c8;box-shadow:inset 1px 1px #ffffff,inset -1px -1px #505050,inset -2px -2px #808080"></div>
<div style="left:1381px;top:816px;width:15px;height:15px;background:#d4d0c8;box-shadow:inset 1px 1px #ffffff,inset -1px -1px #505050,inset -2px -2px #808080"></div>
<div style="left:1396px;top:816px;width:15px;height:15px;background:#d4d0c8;box-shadow:inset -1px -1px #8a8a8a"></div>
<div style="left:1396px;top:815px;width:15px;height:20px;text-align:center;font:bold 17px 'Liberation Mono';line-height:20px;color:#003488;transform:scaleY(1.22);transform-origin:50% 3px">1</div>
<div style="left:1411px;top:816px;width:15px;height:15px;background:#d4d0c8;box-shadow:inset -1px -1px #8a8a8a"></div>
<div style="left:1426px;top:816px;width:15px;height:15px;background:#d4d0c8;box-shadow:inset -1px -1px #8a8a8a"></div>
<div style="left:1306px;top:831px;width:15px;height:15px;background:#d4d0c8;box-shadow:inset 1px 1px #ffffff,inset -1px -1px #505050,inset -2px -2px #808080"></div>
<div style="left:1321px;top:831px;width:15px;height:15px;background:#d4d0c8;box-shadow:inset 1px 1px #ffffff,inset -1px -1px #505050,inset -2px -2px #808080"></div>
<div style="left:1336px;top:831px;width:15px;height:15px;background:#d4d0c8;box-shadow:inset 1px 1px #ffffff,inset -1px -1px #505050,inset -2px -2px #808080"></div>
<div style="left:1351px;top:831px;width:15px;height:15px;background:#d4d0c8;box-shadow:inset 1px 1px #ffffff,inset -1px -1px #505050,inset -2px -2px #808080"></div>
<div style="left:1366px;top:831px;width:15px;height:15px;background:#d4d0c8;box-shadow:inset 1px 1px #ffffff,inset -1px -1px #505050,inset -2px -2px #808080"></div>
<div style="left:1381px;top:831px;width:15px;height:15px;background:#d4d0c8;box-shadow:inset 1px 1px #ffffff,inset -1px -1px #505050,inset -2px -2px #808080"></div>
<div style="left:1396px;top:831px;width:15px;height:15px;background:#d4d0c8;box-shadow:inset -1px -1px #8a8a8a"></div>
<div style="left:1396px;top:830px;width:15px;height:20px;text-align:center;font:bold 17px 'Liberation Mono';line-height:20px;color:#003488;transform:scaleY(1.22);transform-origin:50% 3px">1</div>
<div style="left:1411px;top:831px;width:15px;height:15px;background:#d4d0c8;box-shadow:inset -1px -1px #8a8a8a"></div>
<div style="left:1426px;top:831px;width:15px;height:15px;background:#d4d0c8;box-shadow:inset -1px -1px #8a8a8a"></div>
<div class="win" style="left:1485px;top:587px;width:406px;height:446px"></div>
<div style="left:1489px;top:591px;width:399px;height:19px;background:linear-gradient(to right,#808080,#c0c0c0)"></div>
<div style="left:1557px;top:593px;width:281px;height:15px;background:repeating-linear-gradient(to bottom,rgba(128,128,128,0.8) 0 1px,transparent 1px 2px)"></div>
<div style="left:1491px;top:593px;width:16px;height:16px"><svg width="16" height="16" viewBox="0 0 16 16" shape-rendering="crispEdges"><rect x="0" y="0" width="16" height="16" fill="#fff"/><rect x="10" y="0" width="5" height="5" fill="#000"/><rect x="0" y="5" width="5" height="5" fill="#000"/><rect x="10" y="5" width="5" height="5" fill="#000"/><rect x="5" y="10" width="5" height="6" fill="#000"/><rect x="10" y="10" width="5" height="6" fill="#000"/></svg></div>
<div style="left:1510px;top:591px;height:20px;font:bold 12px 'Liberation Sans';line-height:20px;color:#d5d0c7;white-space:pre;transform:scaleX(0.928);transform-origin:0 0;text-shadow:1px 1px 0 #4c4c4c">Conway</div>
<div class="btn" style="left:1871px;top:593px"><svg width="15" height="15" viewBox="0 0 15 15"><path d="M4 4L10 10M10 4L4 10" stroke="#000" stroke-width="2" stroke-linecap="square"/></svg></div>
<div class="btn" style="left:1856px;top:593px"><svg width="15" height="15" viewBox="0 0 15 15"><path d="M3.5 9.5L7 6L10.5 9.5Z" fill="#000" stroke="#000" stroke-width="0.6"/></svg></div>
<div class="btn" style="left:1841px;top:593px"><svg width="15" height="15" viewBox="0 0 15 15"><path d="M3.5 6L10.5 6L7 9.5Z" fill="#000" stroke="#000" stroke-width="0.6"/></svg></div>
<div style="left:1495px;top:611px;height:20px;font:normal 12px 'Liberation Sans';line-height:20px;color:#000;white-space:pre;transform:scaleX(0.818);transform-origin:0 0;">Game</div>
<div style="left:1535px;top:611px;height:20px;font:normal 12px 'Liberation Sans';line-height:20px;color:#000;white-space:pre;transform:scaleX(0.920);transform-origin:0 0;">Help</div>
<div style="left:1489px;top:631px;width:399px;height:399px;background:#000;"></div>
<svg style="left:1489px;top:631px" width="399" height="399" viewBox="0 0 399 399" fill="#00ff00" shape-rendering="crispEdges"><rect x="0" y="126" width="2" height="2"/><rect x="0" y="128" width="2" height="2"/><rect x="0" y="164" width="2" height="2"/><rect x="0" y="328" width="2" height="2"/><rect x="0" y="332" width="2" height="2"/><rect x="2" y="124" width="2" height="2"/><rect x="2" y="130" width="2" height="2"/><rect x="2" y="164" width="2" height="2"/><rect x="2" y="206" width="2" height="2"/><rect x="2" y="208" width="2" height="2"/><rect x="2" y="328" width="2" height="2"/><rect x="2" y="332" width="2" height="2"/><rect x="4" y="56" width="2" height="2"/><rect x="4" y="126" width="2" height="2"/><rect x="4" y="128" width="2" height="2"/><rect x="4" y="156" width="2" height="2"/><rect x="4" y="158" width="2" height="2"/><rect x="4" y="204" width="2" height="2"/><rect x="4" y="210" width="2" height="2"/><rect x="4" y="252" width="2" height="2"/><rect x="4" y="254" width="2" height="2"/><rect x="4" y="330" width="2" height="2"/><rect x="6" y="56" width="2" height="2"/><rect x="6" y="156" width="2" height="2"/><rect x="6" y="158" width="2" height="2"/><rect x="6" y="206" width="2" height="2"/><rect x="6" y="208" width="2" height="2"/><rect x="6" y="252" width="2" height="2"/><rect x="6" y="256" width="2" height="2"/><rect x="8" y="56" width="2" height="2"/><rect x="8" y="146" width="2" height="2"/><rect x="8" y="174" width="2" height="2"/><rect x="8" y="254" width="2" height="2"/><rect x="8" y="296" width="2" height="2"/><rect x="8" y="298" width="2" height="2"/><rect x="10" y="144" width="2" height="2"/><rect x="10" y="148" width="2" height="2"/><rect x="10" y="172" width="2" height="2"/><rect x="10" y="176" width="2" height="2"/><rect x="10" y="296" width="2" height="2"/><rect x="10" y="298" width="2" height="2"/><rect x="12" y="20" width="2" height="2"/><rect x="12" y="22" width="2" height="2"/><rect x="12" y="24" width="2" height="2"/><rect x="12" y="48" width="2" height="2"/><rect x="12" y="50" width="2" height="2"/><rect x="12" y="52" width="2" height="2"/><rect x="12" y="60" width="2" height="2"/><rect x="12" y="62" width="2" height="2"/><rect x="12" y="64" width="2" height="2"/><rect x="12" y="88" width="2" height="2"/><rect x="12" y="90" width="2" height="2"/><rect x="12" y="120" width="2" height="2"/><rect x="12" y="122" width="2" height="2"/><rect x="12" y="144" width="2" height="2"/><rect x="12" y="148" width="2" height="2"/><rect x="12" y="172" width="2" height="2"/><rect x="12" y="178" width="2" height="2"/><rect x="12" y="304" width="2" height="2"/><rect x="12" y="306" width="2" height="2"/><rect x="12" y="328" width="2" height="2"/><rect x="12" y="330" width="2" height="2"/><rect x="12" y="380" width="2" height="2"/><rect x="14" y="88" width="2" height="2"/><rect x="14" y="90" width="2" height="2"/><rect x="14" y="120" width="2" height="2"/><rect x="14" y="122" width="2" height="2"/><rect x="14" y="146" width="2" height="2"/><rect x="14" y="174" width="2" height="2"/><rect x="14" y="176" width="2" height="2"/><rect x="14" y="304" width="2" height="2"/><rect x="14" y="306" width="2" height="2"/><rect x="14" y="328" width="2" height="2"/><rect x="14" y="330" width="2" height="2"/><rect x="14" y="380" width="2" height="2"/><rect x="16" y="56" width="2" height="2"/><rect x="16" y="380" width="2" height="2"/><rect x="18" y="56" width="2" height="2"/><rect x="18" y="396" width="2" height="2"/><rect x="20" y="56" width="2" height="2"/><rect x="20" y="80" width="2" height="2"/><rect x="20" y="82" width="2" height="2"/><rect x="20" y="240" width="2" height="2"/><rect x="20" y="396" width="2" height="2"/><rect x="22" y="80" width="2" height="2"/><rect x="22" y="82" width="2" height="2"/><rect x="22" y="124" width="2" height="2"/><rect x="22" y="240" width="2" height="2"/><rect x="22" y="396" width="2" height="2"/><rect x="24" y="124" width="2" height="2"/><rect x="24" y="160" width="2" height="2"/><rect x="24" y="162" width="2" height="2"/><rect x="24" y="240" width="2" height="2"/><rect x="24" y="280" width="2" height="2"/><rect x="26" y="124" width="2" height="2"/><rect x="26" y="160" width="2" height="2"/><rect x="26" y="164" width="2" height="2"/><rect x="26" y="280" width="2" height="2"/><rect x="28" y="104" width="2" height="2"/><rect x="28" y="106" width="2" height="2"/><rect x="28" y="128" width="2" height="2"/><rect x="28" y="130" width="2" height="2"/><rect x="28" y="162" width="2" height="2"/><rect x="28" y="196" width="2" height="2"/><rect x="28" y="198" width="2" height="2"/><rect x="28" y="280" width="2" height="2"/><rect x="30" y="104" width="2" height="2"/><rect x="30" y="108" width="2" height="2"/><rect x="30" y="126" width="2" height="2"/><rect x="30" y="132" width="2" height="2"/><rect x="30" y="196" width="2" height="2"/><rect x="30" y="198" width="2" height="2"/><rect x="32" y="12" width="2" height="2"/><rect x="32" y="14" width="2" height="2"/><rect x="32" y="106" width="2" height="2"/><rect x="32" y="128" width="2" height="2"/><rect x="32" y="130" width="2" height="2"/><rect x="34" y="12" width="2" height="2"/><rect x="34" y="16" width="2" height="2"/><rect x="36" y="14" width="2" height="2"/><rect x="36" y="78" width="2" height="2"/><rect x="36" y="80" width="2" height="2"/><rect x="36" y="216" width="2" height="2"/><rect x="36" y="218" width="2" height="2"/><rect x="38" y="78" width="2" height="2"/><rect x="38" y="82" width="2" height="2"/><rect x="38" y="216" width="2" height="2"/><rect x="38" y="218" width="2" height="2"/><rect x="40" y="56" width="2" height="2"/><rect x="40" y="58" width="2" height="2"/><rect x="40" y="60" width="2" height="2"/><rect x="40" y="68" width="2" height="2"/><rect x="40" y="70" width="2" height="2"/><rect x="40" y="72" width="2" height="2"/><rect x="40" y="80" width="2" height="2"/><rect x="40" y="144" width="2" height="2"/><rect x="40" y="146" width="2" height="2"/><rect x="40" y="180" width="2" height="2"/><rect x="40" y="182" width="2" height="2"/><rect x="40" y="206" width="2" height="2"/><rect x="40" y="236" width="2" height="2"/><rect x="40" y="290" width="2" height="2"/><rect x="40" y="354" width="2" height="2"/><rect x="40" y="378" width="2" height="2"/><rect x="42" y="144" width="2" height="2"/><rect x="42" y="148" width="2" height="2"/><rect x="42" y="180" width="2" height="2"/><rect x="42" y="184" width="2" height="2"/><rect x="42" y="204" width="2" height="2"/><rect x="42" y="208" width="2" height="2"/><rect x="42" y="236" width="2" height="2"/><rect x="42" y="288" width="2" height="2"/><rect x="42" y="292" width="2" height="2"/><rect x="42" y="352" width="2" height="2"/><rect x="42" y="356" width="2" height="2"/><rect x="42" y="376" width="2" height="2"/><rect x="42" y="380" width="2" height="2"/><rect x="44" y="146" width="2" height="2"/><rect x="44" y="182" width="2" height="2"/><rect x="44" y="204" width="2" height="2"/><rect x="44" y="208" width="2" height="2"/><rect x="44" y="236" width="2" height="2"/><rect x="44" y="288" width="2" height="2"/><rect x="44" y="292" width="2" height="2"/><rect x="44" y="352" width="2" height="2"/><rect x="44" y="356" width="2" height="2"/><rect x="44" y="376" width="2" height="2"/><rect x="44" y="380" width="2" height="2"/><rect x="46" y="206" width="2" height="2"/><rect x="46" y="290" width="2" height="2"/><rect x="46" y="354" width="2" height="2"/><rect x="46" y="378" width="2" height="2"/><rect x="48" y="8" width="2" height="2"/><rect x="48" y="10" width="2" height="2"/><rect x="48" y="228" width="2" height="2"/><rect x="48" y="230" width="2" height="2"/><rect x="48" y="232" width="2" height="2"/><rect x="48" y="256" width="2" height="2"/><rect x="48" y="258" width="2" height="2"/><rect x="48" y="282" width="2" height="2"/><rect x="48" y="284" width="2" height="2"/><rect x="48" y="298" width="2" height="2"/><rect x="48" y="300" width="2" height="2"/><rect x="48" y="346" width="2" height="2"/><rect x="50" y="8" width="2" height="2"/><rect x="50" y="10" width="2" height="2"/><rect x="50" y="128" width="2" height="2"/><rect x="50" y="130" width="2" height="2"/><rect x="50" y="256" width="2" height="2"/><rect x="50" y="258" width="2" height="2"/><rect x="50" y="280" width="2" height="2"/><rect x="50" y="286" width="2" height="2"/><rect x="50" y="296" width="2" height="2"/><rect x="50" y="302" width="2" height="2"/><rect x="50" y="344" width="2" height="2"/><rect x="50" y="348" width="2" height="2"/><rect x="52" y="62" width="2" height="2"/><rect x="52" y="128" width="2" height="2"/><rect x="52" y="132" width="2" height="2"/><rect x="52" y="142" width="2" height="2"/><rect x="52" y="144" width="2" height="2"/><rect x="52" y="196" width="2" height="2"/><rect x="52" y="282" width="2" height="2"/><rect x="52" y="284" width="2" height="2"/><rect x="52" y="298" width="2" height="2"/><rect x="52" y="300" width="2" height="2"/><rect x="52" y="344" width="2" height="2"/><rect x="52" y="348" width="2" height="2"/><rect x="54" y="60" width="2" height="2"/><rect x="54" y="64" width="2" height="2"/><rect x="54" y="130" width="2" height="2"/><rect x="54" y="142" width="2" height="2"/><rect x="54" y="146" width="2" height="2"/><rect x="54" y="196" width="2" height="2"/><rect x="54" y="346" width="2" height="2"/><rect x="56" y="16" width="2" height="2"/><rect x="56" y="18" width="2" height="2"/><rect x="56" y="20" width="2" height="2"/><rect x="56" y="36" width="2" height="2"/><rect x="56" y="38" width="2" height="2"/><rect x="56" y="62" width="2" height="2"/><rect x="56" y="144" width="2" height="2"/><rect x="56" y="196" width="2" height="2"/><rect x="56" y="210" width="2" height="2"/><rect x="56" y="216" width="2" height="2"/><rect x="56" y="218" width="2" height="2"/><rect x="56" y="290" width="2" height="2"/><rect x="56" y="360" width="2" height="2"/><rect x="56" y="362" width="2" height="2"/><rect x="58" y="36" width="2" height="2"/><rect x="58" y="38" width="2" height="2"/><rect x="58" y="208" width="2" height="2"/><rect x="58" y="212" width="2" height="2"/><rect x="58" y="216" width="2" height="2"/><rect x="58" y="218" width="2" height="2"/><rect x="58" y="288" width="2" height="2"/><rect x="58" y="292" width="2" height="2"/><rect x="58" y="360" width="2" height="2"/><rect x="58" y="362" width="2" height="2"/><rect x="60" y="4" width="2" height="2"/><rect x="60" y="6" width="2" height="2"/><rect x="60" y="182" width="2" height="2"/><rect x="60" y="208" width="2" height="2"/><rect x="60" y="212" width="2" height="2"/><rect x="60" y="288" width="2" height="2"/><rect x="60" y="292" width="2" height="2"/><rect x="62" y="4" width="2" height="2"/><rect x="62" y="6" width="2" height="2"/><rect x="62" y="180" width="2" height="2"/><rect x="62" y="184" width="2" height="2"/><rect x="62" y="210" width="2" height="2"/><rect x="62" y="290" width="2" height="2"/><rect x="64" y="180" width="2" height="2"/><rect x="64" y="184" width="2" height="2"/><rect x="66" y="182" width="2" height="2"/><rect x="68" y="4" width="2" height="2"/><rect x="68" y="6" width="2" height="2"/><rect x="68" y="108" width="2" height="2"/><rect x="68" y="110" width="2" height="2"/><rect x="68" y="112" width="2" height="2"/><rect x="68" y="346" width="2" height="2"/><rect x="68" y="348" width="2" height="2"/><rect x="70" y="4" width="2" height="2"/><rect x="70" y="6" width="2" height="2"/><rect x="70" y="344" width="2" height="2"/><rect x="70" y="350" width="2" height="2"/><rect x="72" y="170" width="2" height="2"/><rect x="72" y="172" width="2" height="2"/><rect x="72" y="192" width="2" height="2"/><rect x="72" y="214" width="2" height="2"/><rect x="72" y="216" width="2" height="2"/><rect x="72" y="346" width="2" height="2"/><rect x="72" y="348" width="2" height="2"/><rect x="74" y="168" width="2" height="2"/><rect x="74" y="174" width="2" height="2"/><rect x="74" y="192" width="2" height="2"/><rect x="74" y="212" width="2" height="2"/><rect x="74" y="218" width="2" height="2"/><rect x="76" y="170" width="2" height="2"/><rect x="76" y="172" width="2" height="2"/><rect x="76" y="180" width="2" height="2"/><rect x="76" y="182" width="2" height="2"/><rect x="76" y="192" width="2" height="2"/><rect x="76" y="214" width="2" height="2"/><rect x="76" y="216" width="2" height="2"/><rect x="78" y="180" width="2" height="2"/><rect x="78" y="184" width="2" height="2"/><rect x="80" y="182" width="2" height="2"/><rect x="80" y="260" width="2" height="2"/><rect x="80" y="262" width="2" height="2"/><rect x="82" y="260" width="2" height="2"/><rect x="82" y="264" width="2" height="2"/><rect x="84" y="262" width="2" height="2"/><rect x="84" y="344" width="2" height="2"/><rect x="84" y="346" width="2" height="2"/><rect x="86" y="344" width="2" height="2"/><rect x="86" y="348" width="2" height="2"/><rect x="88" y="52" width="2" height="2"/><rect x="88" y="184" width="2" height="2"/><rect x="88" y="186" width="2" height="2"/><rect x="88" y="346" width="2" height="2"/><rect x="90" y="52" width="2" height="2"/><rect x="90" y="184" width="2" height="2"/><rect x="90" y="186" width="2" height="2"/><rect x="92" y="52" width="2" height="2"/><rect x="96" y="42" width="2" height="2"/><rect x="98" y="40" width="2" height="2"/><rect x="98" y="44" width="2" height="2"/><rect x="100" y="40" width="2" height="2"/><rect x="100" y="44" width="2" height="2"/><rect x="100" y="86" width="2" height="2"/><rect x="100" y="152" width="2" height="2"/><rect x="100" y="154" width="2" height="2"/><rect x="100" y="176" width="2" height="2"/><rect x="100" y="178" width="2" height="2"/><rect x="100" y="180" width="2" height="2"/><rect x="100" y="272" width="2" height="2"/><rect x="100" y="274" width="2" height="2"/><rect x="102" y="42" width="2" height="2"/><rect x="102" y="84" width="2" height="2"/><rect x="102" y="88" width="2" height="2"/><rect x="102" y="152" width="2" height="2"/><rect x="102" y="154" width="2" height="2"/><rect x="102" y="272" width="2" height="2"/><rect x="102" y="274" width="2" height="2"/><rect x="104" y="84" width="2" height="2"/><rect x="104" y="88" width="2" height="2"/><rect x="106" y="86" width="2" height="2"/><rect x="108" y="34" width="2" height="2"/><rect x="108" y="36" width="2" height="2"/><rect x="108" y="56" width="2" height="2"/><rect x="108" y="150" width="2" height="2"/><rect x="110" y="32" width="2" height="2"/><rect x="110" y="38" width="2" height="2"/><rect x="110" y="56" width="2" height="2"/><rect x="110" y="148" width="2" height="2"/><rect x="110" y="152" width="2" height="2"/><rect x="112" y="34" width="2" height="2"/><rect x="112" y="36" width="2" height="2"/><rect x="112" y="56" width="2" height="2"/><rect x="112" y="100" width="2" height="2"/><rect x="112" y="102" width="2" height="2"/><rect x="112" y="104" width="2" height="2"/><rect x="112" y="148" width="2" height="2"/><rect x="112" y="152" width="2" height="2"/><rect x="112" y="248" width="2" height="2"/><rect x="112" y="314" width="2" height="2"/><rect x="112" y="316" width="2" height="2"/><rect x="112" y="340" width="2" height="2"/><rect x="112" y="342" width="2" height="2"/><rect x="114" y="134" width="2" height="2"/><rect x="114" y="136" width="2" height="2"/><rect x="114" y="138" width="2" height="2"/><rect x="114" y="150" width="2" height="2"/><rect x="114" y="248" width="2" height="2"/><rect x="114" y="312" width="2" height="2"/><rect x="114" y="318" width="2" height="2"/><rect x="114" y="340" width="2" height="2"/><rect x="114" y="344" width="2" height="2"/><rect x="116" y="48" width="2" height="2"/><rect x="116" y="50" width="2" height="2"/><rect x="116" y="52" width="2" height="2"/><rect x="116" y="60" width="2" height="2"/><rect x="116" y="62" width="2" height="2"/><rect x="116" y="64" width="2" height="2"/><rect x="116" y="248" width="2" height="2"/><rect x="116" y="314" width="2" height="2"/><rect x="116" y="316" width="2" height="2"/><rect x="116" y="332" width="2" height="2"/><rect x="116" y="334" width="2" height="2"/><rect x="116" y="336" width="2" height="2"/><rect x="116" y="342" width="2" height="2"/><rect x="118" y="130" width="2" height="2"/><rect x="118" y="142" width="2" height="2"/><rect x="120" y="56" width="2" height="2"/><rect x="120" y="68" width="2" height="2"/><rect x="120" y="70" width="2" height="2"/><rect x="120" y="108" width="2" height="2"/><rect x="120" y="110" width="2" height="2"/><rect x="120" y="112" width="2" height="2"/><rect x="120" y="130" width="2" height="2"/><rect x="120" y="142" width="2" height="2"/><rect x="120" y="236" width="2" height="2"/><rect x="120" y="238" width="2" height="2"/><rect x="120" y="240" width="2" height="2"/><rect x="122" y="56" width="2" height="2"/><rect x="122" y="68" width="2" height="2"/><rect x="122" y="70" width="2" height="2"/><rect x="122" y="130" width="2" height="2"/><rect x="122" y="142" width="2" height="2"/><rect x="124" y="30" width="2" height="2"/><rect x="124" y="56" width="2" height="2"/><rect x="124" y="76" width="2" height="2"/><rect x="124" y="78" width="2" height="2"/><rect x="124" y="260" width="2" height="2"/><rect x="126" y="28" width="2" height="2"/><rect x="126" y="32" width="2" height="2"/><rect x="126" y="76" width="2" height="2"/><rect x="126" y="78" width="2" height="2"/><rect x="126" y="134" width="2" height="2"/><rect x="126" y="136" width="2" height="2"/><rect x="126" y="138" width="2" height="2"/><rect x="126" y="260" width="2" height="2"/><rect x="128" y="28" width="2" height="2"/><rect x="128" y="32" width="2" height="2"/><rect x="128" y="186" width="2" height="2"/><rect x="128" y="260" width="2" height="2"/><rect x="130" y="30" width="2" height="2"/><rect x="130" y="184" width="2" height="2"/><rect x="130" y="188" width="2" height="2"/><rect x="132" y="184" width="2" height="2"/><rect x="132" y="188" width="2" height="2"/><rect x="132" y="256" width="2" height="2"/><rect x="132" y="258" width="2" height="2"/><rect x="134" y="186" width="2" height="2"/><rect x="134" y="256" width="2" height="2"/><rect x="134" y="258" width="2" height="2"/><rect x="136" y="42" width="2" height="2"/><rect x="136" y="44" width="2" height="2"/><rect x="136" y="172" width="2" height="2"/><rect x="136" y="174" width="2" height="2"/><rect x="136" y="356" width="2" height="2"/><rect x="136" y="358" width="2" height="2"/><rect x="138" y="40" width="2" height="2"/><rect x="138" y="46" width="2" height="2"/><rect x="138" y="172" width="2" height="2"/><rect x="138" y="174" width="2" height="2"/><rect x="138" y="356" width="2" height="2"/><rect x="138" y="358" width="2" height="2"/><rect x="140" y="42" width="2" height="2"/><rect x="140" y="44" width="2" height="2"/><rect x="140" y="228" width="2" height="2"/><rect x="140" y="230" width="2" height="2"/><rect x="142" y="228" width="2" height="2"/><rect x="142" y="230" width="2" height="2"/><rect x="144" y="294" width="2" height="2"/><rect x="144" y="296" width="2" height="2"/><rect x="146" y="292" width="2" height="2"/><rect x="146" y="298" width="2" height="2"/><rect x="148" y="184" width="2" height="2"/><rect x="148" y="186" width="2" height="2"/><rect x="148" y="204" width="2" height="2"/><rect x="148" y="206" width="2" height="2"/><rect x="148" y="294" width="2" height="2"/><rect x="148" y="296" width="2" height="2"/><rect x="148" y="396" width="2" height="2"/><rect x="148" y="398" width="2" height="2"/><rect x="150" y="184" width="2" height="2"/><rect x="150" y="186" width="2" height="2"/><rect x="150" y="204" width="2" height="2"/><rect x="150" y="206" width="2" height="2"/><rect x="150" y="396" width="2" height="2"/><rect x="150" y="398" width="2" height="2"/><rect x="152" y="162" width="2" height="2"/><rect x="152" y="164" width="2" height="2"/><rect x="152" y="244" width="2" height="2"/><rect x="152" y="246" width="2" height="2"/><rect x="152" y="352" width="2" height="2"/><rect x="154" y="162" width="2" height="2"/><rect x="154" y="166" width="2" height="2"/><rect x="154" y="244" width="2" height="2"/><rect x="154" y="246" width="2" height="2"/><rect x="154" y="352" width="2" height="2"/><rect x="156" y="12" width="2" height="2"/><rect x="156" y="14" width="2" height="2"/><rect x="156" y="164" width="2" height="2"/><rect x="156" y="352" width="2" height="2"/><rect x="158" y="12" width="2" height="2"/><rect x="158" y="14" width="2" height="2"/><rect x="160" y="34" width="2" height="2"/><rect x="160" y="36" width="2" height="2"/><rect x="160" y="56" width="2" height="2"/><rect x="160" y="58" width="2" height="2"/><rect x="160" y="124" width="2" height="2"/><rect x="160" y="126" width="2" height="2"/><rect x="160" y="200" width="2" height="2"/><rect x="160" y="202" width="2" height="2"/><rect x="160" y="306" width="2" height="2"/><rect x="160" y="344" width="2" height="2"/><rect x="160" y="346" width="2" height="2"/><rect x="160" y="348" width="2" height="2"/><rect x="160" y="356" width="2" height="2"/><rect x="160" y="358" width="2" height="2"/><rect x="160" y="360" width="2" height="2"/><rect x="162" y="34" width="2" height="2"/><rect x="162" y="38" width="2" height="2"/><rect x="162" y="56" width="2" height="2"/><rect x="162" y="58" width="2" height="2"/><rect x="162" y="124" width="2" height="2"/><rect x="162" y="126" width="2" height="2"/><rect x="162" y="200" width="2" height="2"/><rect x="162" y="202" width="2" height="2"/><rect x="162" y="304" width="2" height="2"/><rect x="162" y="308" width="2" height="2"/><rect x="164" y="36" width="2" height="2"/><rect x="164" y="304" width="2" height="2"/><rect x="164" y="308" width="2" height="2"/><rect x="164" y="352" width="2" height="2"/><rect x="166" y="306" width="2" height="2"/><rect x="166" y="352" width="2" height="2"/><rect x="168" y="252" width="2" height="2"/><rect x="168" y="254" width="2" height="2"/><rect x="168" y="256" width="2" height="2"/><rect x="168" y="296" width="2" height="2"/><rect x="168" y="298" width="2" height="2"/><rect x="168" y="352" width="2" height="2"/><rect x="170" y="296" width="2" height="2"/><rect x="170" y="298" width="2" height="2"/><rect x="172" y="80" width="2" height="2"/><rect x="172" y="152" width="2" height="2"/><rect x="172" y="396" width="2" height="2"/><rect x="174" y="80" width="2" height="2"/><rect x="174" y="152" width="2" height="2"/><rect x="174" y="396" width="2" height="2"/><rect x="176" y="36" width="2" height="2"/><rect x="176" y="38" width="2" height="2"/><rect x="176" y="80" width="2" height="2"/><rect x="176" y="152" width="2" height="2"/><rect x="176" y="228" width="2" height="2"/><rect x="176" y="230" width="2" height="2"/><rect x="176" y="396" width="2" height="2"/><rect x="178" y="36" width="2" height="2"/><rect x="178" y="38" width="2" height="2"/><rect x="178" y="228" width="2" height="2"/><rect x="178" y="230" width="2" height="2"/><rect x="180" y="24" width="2" height="2"/><rect x="180" y="26" width="2" height="2"/><rect x="180" y="144" width="2" height="2"/><rect x="180" y="146" width="2" height="2"/><rect x="180" y="148" width="2" height="2"/><rect x="180" y="156" width="2" height="2"/><rect x="180" y="158" width="2" height="2"/><rect x="180" y="160" width="2" height="2"/><rect x="180" y="252" width="2" height="2"/><rect x="180" y="254" width="2" height="2"/><rect x="180" y="284" width="2" height="2"/><rect x="180" y="286" width="2" height="2"/><rect x="182" y="24" width="2" height="2"/><rect x="182" y="26" width="2" height="2"/><rect x="182" y="252" width="2" height="2"/><rect x="182" y="256" width="2" height="2"/><rect x="182" y="284" width="2" height="2"/><rect x="182" y="288" width="2" height="2"/><rect x="184" y="152" width="2" height="2"/><rect x="184" y="164" width="2" height="2"/><rect x="184" y="166" width="2" height="2"/><rect x="184" y="254" width="2" height="2"/><rect x="184" y="286" width="2" height="2"/><rect x="186" y="152" width="2" height="2"/><rect x="186" y="164" width="2" height="2"/><rect x="186" y="166" width="2" height="2"/><rect x="188" y="152" width="2" height="2"/><rect x="188" y="272" width="2" height="2"/><rect x="188" y="274" width="2" height="2"/><rect x="188" y="386" width="2" height="2"/><rect x="188" y="388" width="2" height="2"/><rect x="190" y="272" width="2" height="2"/><rect x="190" y="276" width="2" height="2"/><rect x="190" y="384" width="2" height="2"/><rect x="190" y="390" width="2" height="2"/><rect x="192" y="216" width="2" height="2"/><rect x="192" y="274" width="2" height="2"/><rect x="192" y="384" width="2" height="2"/><rect x="192" y="390" width="2" height="2"/><rect x="194" y="216" width="2" height="2"/><rect x="194" y="386" width="2" height="2"/><rect x="194" y="388" width="2" height="2"/><rect x="196" y="92" width="2" height="2"/><rect x="196" y="94" width="2" height="2"/><rect x="196" y="216" width="2" height="2"/><rect x="196" y="238" width="2" height="2"/><rect x="196" y="240" width="2" height="2"/><rect x="198" y="92" width="2" height="2"/><rect x="198" y="94" width="2" height="2"/><rect x="198" y="236" width="2" height="2"/><rect x="198" y="242" width="2" height="2"/><rect x="200" y="32" width="2" height="2"/><rect x="200" y="34" width="2" height="2"/><rect x="200" y="238" width="2" height="2"/><rect x="200" y="240" width="2" height="2"/><rect x="202" y="32" width="2" height="2"/><rect x="202" y="36" width="2" height="2"/><rect x="204" y="34" width="2" height="2"/><rect x="208" y="48" width="2" height="2"/><rect x="208" y="50" width="2" height="2"/><rect x="208" y="52" width="2" height="2"/><rect x="212" y="44" width="2" height="2"/><rect x="214" y="44" width="2" height="2"/><rect x="216" y="44" width="2" height="2"/><rect x="216" y="272" width="2" height="2"/><rect x="218" y="272" width="2" height="2"/><rect x="220" y="68" width="2" height="2"/><rect x="220" y="200" width="2" height="2"/><rect x="220" y="202" width="2" height="2"/><rect x="220" y="272" width="2" height="2"/><rect x="222" y="68" width="2" height="2"/><rect x="222" y="200" width="2" height="2"/><rect x="222" y="202" width="2" height="2"/><rect x="224" y="12" width="2" height="2"/><rect x="224" y="14" width="2" height="2"/><rect x="224" y="16" width="2" height="2"/><rect x="224" y="68" width="2" height="2"/><rect x="224" y="236" width="2" height="2"/><rect x="224" y="238" width="2" height="2"/><rect x="224" y="240" width="2" height="2"/><rect x="224" y="276" width="2" height="2"/><rect x="224" y="278" width="2" height="2"/><rect x="224" y="280" width="2" height="2"/><rect x="228" y="60" width="2" height="2"/><rect x="228" y="62" width="2" height="2"/><rect x="228" y="64" width="2" height="2"/><rect x="228" y="358" width="2" height="2"/><rect x="228" y="360" width="2" height="2"/><rect x="230" y="328" width="2" height="2"/><rect x="230" y="330" width="2" height="2"/><rect x="230" y="356" width="2" height="2"/><rect x="230" y="362" width="2" height="2"/><rect x="232" y="22" width="2" height="2"/><rect x="232" y="24" width="2" height="2"/><rect x="232" y="328" width="2" height="2"/><rect x="232" y="332" width="2" height="2"/><rect x="232" y="358" width="2" height="2"/><rect x="232" y="360" width="2" height="2"/><rect x="234" y="20" width="2" height="2"/><rect x="234" y="26" width="2" height="2"/><rect x="234" y="330" width="2" height="2"/><rect x="236" y="20" width="2" height="2"/><rect x="236" y="26" width="2" height="2"/><rect x="236" y="150" width="2" height="2"/><rect x="236" y="152" width="2" height="2"/><rect x="236" y="316" width="2" height="2"/><rect x="236" y="318" width="2" height="2"/><rect x="238" y="22" width="2" height="2"/><rect x="238" y="24" width="2" height="2"/><rect x="238" y="148" width="2" height="2"/><rect x="238" y="154" width="2" height="2"/><rect x="238" y="316" width="2" height="2"/><rect x="238" y="320" width="2" height="2"/><rect x="238" y="362" width="2" height="2"/><rect x="238" y="364" width="2" height="2"/><rect x="240" y="30" width="2" height="2"/><rect x="240" y="150" width="2" height="2"/><rect x="240" y="152" width="2" height="2"/><rect x="240" y="270" width="2" height="2"/><rect x="240" y="318" width="2" height="2"/><rect x="240" y="362" width="2" height="2"/><rect x="240" y="366" width="2" height="2"/><rect x="242" y="28" width="2" height="2"/><rect x="242" y="32" width="2" height="2"/><rect x="242" y="268" width="2" height="2"/><rect x="242" y="272" width="2" height="2"/><rect x="242" y="364" width="2" height="2"/><rect x="244" y="28" width="2" height="2"/><rect x="244" y="32" width="2" height="2"/><rect x="244" y="268" width="2" height="2"/><rect x="244" y="272" width="2" height="2"/><rect x="246" y="30" width="2" height="2"/><rect x="246" y="270" width="2" height="2"/><rect x="248" y="54" width="2" height="2"/><rect x="248" y="352" width="2" height="2"/><rect x="250" y="52" width="2" height="2"/><rect x="250" y="56" width="2" height="2"/><rect x="250" y="352" width="2" height="2"/><rect x="252" y="18" width="2" height="2"/><rect x="252" y="20" width="2" height="2"/><rect x="252" y="38" width="2" height="2"/><rect x="252" y="40" width="2" height="2"/><rect x="252" y="54" width="2" height="2"/><rect x="252" y="64" width="2" height="2"/><rect x="252" y="66" width="2" height="2"/><rect x="252" y="208" width="2" height="2"/><rect x="252" y="222" width="2" height="2"/><rect x="252" y="224" width="2" height="2"/><rect x="252" y="268" width="2" height="2"/><rect x="252" y="270" width="2" height="2"/><rect x="252" y="310" width="2" height="2"/><rect x="252" y="312" width="2" height="2"/><rect x="252" y="352" width="2" height="2"/><rect x="254" y="16" width="2" height="2"/><rect x="254" y="22" width="2" height="2"/><rect x="254" y="36" width="2" height="2"/><rect x="254" y="42" width="2" height="2"/><rect x="254" y="64" width="2" height="2"/><rect x="254" y="66" width="2" height="2"/><rect x="254" y="208" width="2" height="2"/><rect x="254" y="222" width="2" height="2"/><rect x="254" y="226" width="2" height="2"/><rect x="254" y="268" width="2" height="2"/><rect x="254" y="270" width="2" height="2"/><rect x="254" y="308" width="2" height="2"/><rect x="254" y="314" width="2" height="2"/><rect x="256" y="18" width="2" height="2"/><rect x="256" y="20" width="2" height="2"/><rect x="256" y="38" width="2" height="2"/><rect x="256" y="40" width="2" height="2"/><rect x="256" y="208" width="2" height="2"/><rect x="256" y="224" width="2" height="2"/><rect x="256" y="310" width="2" height="2"/><rect x="256" y="312" width="2" height="2"/><rect x="256" y="344" width="2" height="2"/><rect x="256" y="346" width="2" height="2"/><rect x="256" y="348" width="2" height="2"/><rect x="260" y="30" width="2" height="2"/><rect x="260" y="64" width="2" height="2"/><rect x="260" y="66" width="2" height="2"/><rect x="260" y="84" width="2" height="2"/><rect x="260" y="86" width="2" height="2"/><rect x="260" y="272" width="2" height="2"/><rect x="260" y="328" width="2" height="2"/><rect x="260" y="330" width="2" height="2"/><rect x="262" y="28" width="2" height="2"/><rect x="262" y="32" width="2" height="2"/><rect x="262" y="64" width="2" height="2"/><rect x="262" y="66" width="2" height="2"/><rect x="262" y="84" width="2" height="2"/><rect x="262" y="88" width="2" height="2"/><rect x="262" y="272" width="2" height="2"/><rect x="262" y="328" width="2" height="2"/><rect x="262" y="330" width="2" height="2"/><rect x="264" y="28" width="2" height="2"/><rect x="264" y="32" width="2" height="2"/><rect x="264" y="86" width="2" height="2"/><rect x="264" y="166" width="2" height="2"/><rect x="264" y="168" width="2" height="2"/><rect x="264" y="272" width="2" height="2"/><rect x="264" y="292" width="2" height="2"/><rect x="264" y="294" width="2" height="2"/><rect x="264" y="296" width="2" height="2"/><rect x="266" y="30" width="2" height="2"/><rect x="266" y="164" width="2" height="2"/><rect x="266" y="170" width="2" height="2"/><rect x="268" y="78" width="2" height="2"/><rect x="268" y="166" width="2" height="2"/><rect x="268" y="168" width="2" height="2"/><rect x="268" y="320" width="2" height="2"/><rect x="270" y="76" width="2" height="2"/><rect x="270" y="80" width="2" height="2"/><rect x="270" y="320" width="2" height="2"/><rect x="272" y="76" width="2" height="2"/><rect x="272" y="80" width="2" height="2"/><rect x="272" y="278" width="2" height="2"/><rect x="272" y="320" width="2" height="2"/><rect x="274" y="78" width="2" height="2"/><rect x="274" y="276" width="2" height="2"/><rect x="274" y="280" width="2" height="2"/><rect x="276" y="70" width="2" height="2"/><rect x="276" y="72" width="2" height="2"/><rect x="276" y="86" width="2" height="2"/><rect x="276" y="88" width="2" height="2"/><rect x="276" y="114" width="2" height="2"/><rect x="276" y="276" width="2" height="2"/><rect x="276" y="280" width="2" height="2"/><rect x="278" y="68" width="2" height="2"/><rect x="278" y="74" width="2" height="2"/><rect x="278" y="84" width="2" height="2"/><rect x="278" y="90" width="2" height="2"/><rect x="278" y="112" width="2" height="2"/><rect x="278" y="116" width="2" height="2"/><rect x="278" y="278" width="2" height="2"/><rect x="280" y="20" width="2" height="2"/><rect x="280" y="22" width="2" height="2"/><rect x="280" y="70" width="2" height="2"/><rect x="280" y="72" width="2" height="2"/><rect x="280" y="86" width="2" height="2"/><rect x="280" y="88" width="2" height="2"/><rect x="280" y="112" width="2" height="2"/><rect x="280" y="116" width="2" height="2"/><rect x="282" y="20" width="2" height="2"/><rect x="282" y="24" width="2" height="2"/><rect x="282" y="114" width="2" height="2"/><rect x="284" y="22" width="2" height="2"/><rect x="284" y="78" width="2" height="2"/><rect x="284" y="96" width="2" height="2"/><rect x="284" y="98" width="2" height="2"/><rect x="286" y="76" width="2" height="2"/><rect x="286" y="80" width="2" height="2"/><rect x="286" y="96" width="2" height="2"/><rect x="286" y="98" width="2" height="2"/><rect x="288" y="34" width="2" height="2"/><rect x="288" y="36" width="2" height="2"/><rect x="288" y="64" width="2" height="2"/><rect x="288" y="66" width="2" height="2"/><rect x="288" y="76" width="2" height="2"/><rect x="288" y="80" width="2" height="2"/><rect x="288" y="376" width="2" height="2"/><rect x="288" y="378" width="2" height="2"/><rect x="290" y="32" width="2" height="2"/><rect x="290" y="38" width="2" height="2"/><rect x="290" y="64" width="2" height="2"/><rect x="290" y="66" width="2" height="2"/><rect x="290" y="78" width="2" height="2"/><rect x="290" y="376" width="2" height="2"/><rect x="290" y="378" width="2" height="2"/><rect x="292" y="34" width="2" height="2"/><rect x="292" y="36" width="2" height="2"/><rect x="292" y="204" width="2" height="2"/><rect x="292" y="206" width="2" height="2"/><rect x="292" y="208" width="2" height="2"/><rect x="292" y="214" width="2" height="2"/><rect x="292" y="320" width="2" height="2"/><rect x="292" y="322" width="2" height="2"/><rect x="292" y="324" width="2" height="2"/><rect x="294" y="212" width="2" height="2"/><rect x="294" y="216" width="2" height="2"/><rect x="296" y="64" width="2" height="2"/><rect x="296" y="66" width="2" height="2"/><rect x="296" y="168" width="2" height="2"/><rect x="296" y="170" width="2" height="2"/><rect x="296" y="214" width="2" height="2"/><rect x="296" y="258" width="2" height="2"/><rect x="296" y="372" width="2" height="2"/><rect x="298" y="64" width="2" height="2"/><rect x="298" y="66" width="2" height="2"/><rect x="298" y="168" width="2" height="2"/><rect x="298" y="170" width="2" height="2"/><rect x="298" y="256" width="2" height="2"/><rect x="298" y="260" width="2" height="2"/><rect x="298" y="372" width="2" height="2"/><rect x="300" y="88" width="2" height="2"/><rect x="300" y="90" width="2" height="2"/><rect x="300" y="92" width="2" height="2"/><rect x="300" y="208" width="2" height="2"/><rect x="300" y="210" width="2" height="2"/><rect x="300" y="212" width="2" height="2"/><rect x="300" y="228" width="2" height="2"/><rect x="300" y="256" width="2" height="2"/><rect x="300" y="260" width="2" height="2"/><rect x="300" y="372" width="2" height="2"/><rect x="302" y="226" width="2" height="2"/><rect x="302" y="228" width="2" height="2"/><rect x="302" y="230" width="2" height="2"/><rect x="302" y="258" width="2" height="2"/><rect x="304" y="84" width="2" height="2"/><rect x="304" y="224" width="2" height="2"/><rect x="304" y="226" width="2" height="2"/><rect x="304" y="228" width="2" height="2"/><rect x="304" y="230" width="2" height="2"/><rect x="304" y="232" width="2" height="2"/><rect x="304" y="352" width="2" height="2"/><rect x="304" y="354" width="2" height="2"/><rect x="304" y="356" width="2" height="2"/><rect x="306" y="84" width="2" height="2"/><rect x="306" y="222" width="2" height="2"/><rect x="306" y="224" width="2" height="2"/><rect x="306" y="226" width="2" height="2"/><rect x="306" y="230" width="2" height="2"/><rect x="306" y="232" width="2" height="2"/><rect x="306" y="234" width="2" height="2"/><rect x="308" y="20" width="2" height="2"/><rect x="308" y="22" width="2" height="2"/><rect x="308" y="24" width="2" height="2"/><rect x="308" y="40" width="2" height="2"/><rect x="308" y="42" width="2" height="2"/><rect x="308" y="84" width="2" height="2"/><rect x="308" y="220" width="2" height="2"/><rect x="308" y="222" width="2" height="2"/><rect x="308" y="224" width="2" height="2"/><rect x="308" y="232" width="2" height="2"/><rect x="308" y="234" width="2" height="2"/><rect x="308" y="236" width="2" height="2"/><rect x="308" y="304" width="2" height="2"/><rect x="310" y="40" width="2" height="2"/><rect x="310" y="42" width="2" height="2"/><rect x="310" y="222" width="2" height="2"/><rect x="310" y="224" width="2" height="2"/><rect x="310" y="226" width="2" height="2"/><rect x="310" y="230" width="2" height="2"/><rect x="310" y="232" width="2" height="2"/><rect x="310" y="234" width="2" height="2"/><rect x="310" y="304" width="2" height="2"/><rect x="312" y="144" width="2" height="2"/><rect x="312" y="156" width="2" height="2"/><rect x="312" y="158" width="2" height="2"/><rect x="312" y="168" width="2" height="2"/><rect x="312" y="174" width="2" height="2"/><rect x="312" y="176" width="2" height="2"/><rect x="312" y="224" width="2" height="2"/><rect x="312" y="226" width="2" height="2"/><rect x="312" y="228" width="2" height="2"/><rect x="312" y="230" width="2" height="2"/><rect x="312" y="232" width="2" height="2"/><rect x="312" y="304" width="2" height="2"/><rect x="312" y="364" width="2" height="2"/><rect x="312" y="366" width="2" height="2"/><rect x="314" y="144" width="2" height="2"/><rect x="314" y="154" width="2" height="2"/><rect x="314" y="160" width="2" height="2"/><rect x="314" y="162" width="2" height="2"/><rect x="314" y="164" width="2" height="2"/><rect x="314" y="168" width="2" height="2"/><rect x="314" y="172" width="2" height="2"/><rect x="314" y="178" width="2" height="2"/><rect x="314" y="226" width="2" height="2"/><rect x="314" y="228" width="2" height="2"/><rect x="314" y="230" width="2" height="2"/><rect x="314" y="364" width="2" height="2"/><rect x="314" y="366" width="2" height="2"/><rect x="316" y="144" width="2" height="2"/><rect x="316" y="156" width="2" height="2"/><rect x="316" y="158" width="2" height="2"/><rect x="316" y="160" width="2" height="2"/><rect x="316" y="166" width="2" height="2"/><rect x="316" y="168" width="2" height="2"/><rect x="316" y="174" width="2" height="2"/><rect x="316" y="176" width="2" height="2"/><rect x="316" y="228" width="2" height="2"/><rect x="316" y="308" width="2" height="2"/><rect x="316" y="310" width="2" height="2"/><rect x="316" y="312" width="2" height="2"/><rect x="318" y="162" width="2" height="2"/><rect x="318" y="164" width="2" height="2"/><rect x="320" y="88" width="2" height="2"/><rect x="320" y="108" width="2" height="2"/><rect x="320" y="110" width="2" height="2"/><rect x="320" y="212" width="2" height="2"/><rect x="320" y="214" width="2" height="2"/><rect x="322" y="88" width="2" height="2"/><rect x="322" y="108" width="2" height="2"/><rect x="322" y="110" width="2" height="2"/><rect x="322" y="212" width="2" height="2"/><rect x="322" y="216" width="2" height="2"/><rect x="324" y="88" width="2" height="2"/><rect x="324" y="148" width="2" height="2"/><rect x="324" y="150" width="2" height="2"/><rect x="324" y="214" width="2" height="2"/><rect x="326" y="148" width="2" height="2"/><rect x="326" y="150" width="2" height="2"/><rect x="328" y="218" width="2" height="2"/><rect x="328" y="220" width="2" height="2"/><rect x="330" y="218" width="2" height="2"/><rect x="330" y="222" width="2" height="2"/><rect x="332" y="220" width="2" height="2"/><rect x="332" y="350" width="2" height="2"/><rect x="332" y="352" width="2" height="2"/><rect x="334" y="238" width="2" height="2"/><rect x="334" y="348" width="2" height="2"/><rect x="334" y="354" width="2" height="2"/><rect x="336" y="48" width="2" height="2"/><rect x="336" y="50" width="2" height="2"/><rect x="336" y="56" width="2" height="2"/><rect x="336" y="58" width="2" height="2"/><rect x="336" y="226" width="2" height="2"/><rect x="336" y="228" width="2" height="2"/><rect x="336" y="238" width="2" height="2"/><rect x="336" y="296" width="2" height="2"/><rect x="336" y="298" width="2" height="2"/><rect x="336" y="350" width="2" height="2"/><rect x="336" y="352" width="2" height="2"/><rect x="338" y="48" width="2" height="2"/><rect x="338" y="50" width="2" height="2"/><rect x="338" y="56" width="2" height="2"/><rect x="338" y="58" width="2" height="2"/><rect x="338" y="224" width="2" height="2"/><rect x="338" y="230" width="2" height="2"/><rect x="338" y="238" width="2" height="2"/><rect x="338" y="272" width="2" height="2"/><rect x="338" y="274" width="2" height="2"/><rect x="338" y="296" width="2" height="2"/><rect x="338" y="300" width="2" height="2"/><rect x="340" y="18" width="2" height="2"/><rect x="340" y="20" width="2" height="2"/><rect x="340" y="146" width="2" height="2"/><rect x="340" y="226" width="2" height="2"/><rect x="340" y="228" width="2" height="2"/><rect x="340" y="234" width="2" height="2"/><rect x="340" y="236" width="2" height="2"/><rect x="340" y="272" width="2" height="2"/><rect x="340" y="276" width="2" height="2"/><rect x="340" y="298" width="2" height="2"/><rect x="342" y="16" width="2" height="2"/><rect x="342" y="22" width="2" height="2"/><rect x="342" y="144" width="2" height="2"/><rect x="342" y="148" width="2" height="2"/><rect x="342" y="232" width="2" height="2"/><rect x="342" y="238" width="2" height="2"/><rect x="342" y="274" width="2" height="2"/><rect x="344" y="18" width="2" height="2"/><rect x="344" y="20" width="2" height="2"/><rect x="344" y="102" width="2" height="2"/><rect x="344" y="104" width="2" height="2"/><rect x="344" y="144" width="2" height="2"/><rect x="344" y="148" width="2" height="2"/><rect x="344" y="234" width="2" height="2"/><rect x="344" y="236" width="2" height="2"/><rect x="344" y="240" width="2" height="2"/><rect x="344" y="242" width="2" height="2"/><rect x="344" y="360" width="2" height="2"/><rect x="344" y="362" width="2" height="2"/><rect x="346" y="102" width="2" height="2"/><rect x="346" y="106" width="2" height="2"/><rect x="346" y="146" width="2" height="2"/><rect x="346" y="240" width="2" height="2"/><rect x="346" y="244" width="2" height="2"/><rect x="346" y="360" width="2" height="2"/><rect x="346" y="364" width="2" height="2"/><rect x="348" y="104" width="2" height="2"/><rect x="348" y="242" width="2" height="2"/><rect x="348" y="340" width="2" height="2"/><rect x="348" y="342" width="2" height="2"/><rect x="348" y="362" width="2" height="2"/><rect x="350" y="340" width="2" height="2"/><rect x="350" y="342" width="2" height="2"/><rect x="352" y="20" width="2" height="2"/><rect x="352" y="22" width="2" height="2"/><rect x="352" y="64" width="2" height="2"/><rect x="352" y="246" width="2" height="2"/><rect x="352" y="248" width="2" height="2"/><rect x="354" y="20" width="2" height="2"/><rect x="354" y="22" width="2" height="2"/><rect x="354" y="64" width="2" height="2"/><rect x="354" y="246" width="2" height="2"/><rect x="354" y="248" width="2" height="2"/><rect x="356" y="64" width="2" height="2"/><rect x="356" y="228" width="2" height="2"/><rect x="356" y="230" width="2" height="2"/><rect x="356" y="232" width="2" height="2"/><rect x="356" y="276" width="2" height="2"/><rect x="356" y="278" width="2" height="2"/><rect x="356" y="280" width="2" height="2"/><rect x="360" y="28" width="2" height="2"/><rect x="360" y="30" width="2" height="2"/><rect x="360" y="68" width="2" height="2"/><rect x="360" y="70" width="2" height="2"/><rect x="360" y="72" width="2" height="2"/><rect x="360" y="210" width="2" height="2"/><rect x="360" y="296" width="2" height="2"/><rect x="360" y="298" width="2" height="2"/><rect x="360" y="328" width="2" height="2"/><rect x="360" y="356" width="2" height="2"/><rect x="362" y="28" width="2" height="2"/><rect x="362" y="30" width="2" height="2"/><rect x="362" y="208" width="2" height="2"/><rect x="362" y="212" width="2" height="2"/><rect x="362" y="296" width="2" height="2"/><rect x="362" y="298" width="2" height="2"/><rect x="362" y="328" width="2" height="2"/><rect x="362" y="356" width="2" height="2"/><rect x="364" y="12" width="2" height="2"/><rect x="364" y="14" width="2" height="2"/><rect x="364" y="16" width="2" height="2"/><rect x="364" y="208" width="2" height="2"/><rect x="364" y="212" width="2" height="2"/><rect x="364" y="328" width="2" height="2"/><rect x="364" y="356" width="2" height="2"/><rect x="364" y="362" width="2" height="2"/><rect x="364" y="364" width="2" height="2"/><rect x="366" y="82" width="2" height="2"/><rect x="366" y="84" width="2" height="2"/><rect x="366" y="86" width="2" height="2"/><rect x="366" y="210" width="2" height="2"/><rect x="366" y="360" width="2" height="2"/><rect x="366" y="366" width="2" height="2"/><rect x="368" y="260" width="2" height="2"/><rect x="368" y="262" width="2" height="2"/><rect x="368" y="320" width="2" height="2"/><rect x="368" y="322" width="2" height="2"/><rect x="368" y="324" width="2" height="2"/><rect x="368" y="332" width="2" height="2"/><rect x="368" y="334" width="2" height="2"/><rect x="368" y="336" width="2" height="2"/><rect x="368" y="362" width="2" height="2"/><rect x="368" y="364" width="2" height="2"/><rect x="370" y="78" width="2" height="2"/><rect x="370" y="90" width="2" height="2"/><rect x="370" y="260" width="2" height="2"/><rect x="370" y="262" width="2" height="2"/><rect x="372" y="64" width="2" height="2"/><rect x="372" y="78" width="2" height="2"/><rect x="372" y="90" width="2" height="2"/><rect x="372" y="228" width="2" height="2"/><rect x="372" y="260" width="2" height="2"/><rect x="372" y="262" width="2" height="2"/><rect x="372" y="308" width="2" height="2"/><rect x="372" y="310" width="2" height="2"/><rect x="372" y="328" width="2" height="2"/><rect x="374" y="64" width="2" height="2"/><rect x="374" y="78" width="2" height="2"/><rect x="374" y="90" width="2" height="2"/><rect x="374" y="228" width="2" height="2"/><rect x="374" y="260" width="2" height="2"/><rect x="374" y="262" width="2" height="2"/><rect x="374" y="308" width="2" height="2"/><rect x="374" y="310" width="2" height="2"/><rect x="374" y="328" width="2" height="2"/><rect x="376" y="16" width="2" height="2"/><rect x="376" y="18" width="2" height="2"/><rect x="376" y="64" width="2" height="2"/><rect x="376" y="132" width="2" height="2"/><rect x="376" y="134" width="2" height="2"/><rect x="376" y="156" width="2" height="2"/><rect x="376" y="158" width="2" height="2"/><rect x="376" y="160" width="2" height="2"/><rect x="376" y="180" width="2" height="2"/><rect x="376" y="182" width="2" height="2"/><rect x="376" y="228" width="2" height="2"/><rect x="376" y="328" width="2" height="2"/><rect x="376" y="378" width="2" height="2"/><rect x="376" y="380" width="2" height="2"/><rect x="378" y="16" width="2" height="2"/><rect x="378" y="20" width="2" height="2"/><rect x="378" y="82" width="2" height="2"/><rect x="378" y="84" width="2" height="2"/><rect x="378" y="86" width="2" height="2"/><rect x="378" y="132" width="2" height="2"/><rect x="378" y="134" width="2" height="2"/><rect x="378" y="180" width="2" height="2"/><rect x="378" y="184" width="2" height="2"/><rect x="378" y="376" width="2" height="2"/><rect x="378" y="382" width="2" height="2"/><rect x="380" y="18" width="2" height="2"/><rect x="380" y="182" width="2" height="2"/><rect x="380" y="376" width="2" height="2"/><rect x="380" y="382" width="2" height="2"/><rect x="382" y="378" width="2" height="2"/><rect x="382" y="380" width="2" height="2"/><rect x="384" y="52" width="2" height="2"/><rect x="384" y="392" width="2" height="2"/><rect x="384" y="394" width="2" height="2"/><rect x="386" y="52" width="2" height="2"/><rect x="386" y="392" width="2" height="2"/><rect x="386" y="396" width="2" height="2"/><rect x="388" y="52" width="2" height="2"/><rect x="388" y="92" width="2" height="2"/><rect x="388" y="190" width="2" height="2"/><rect x="388" y="318" width="2" height="2"/><rect x="388" y="320" width="2" height="2"/><rect x="388" y="364" width="2" height="2"/><rect x="388" y="366" width="2" height="2"/><rect x="388" y="394" width="2" height="2"/><rect x="390" y="4" width="2" height="2"/><rect x="390" y="92" width="2" height="2"/><rect x="390" y="188" width="2" height="2"/><rect x="390" y="192" width="2" height="2"/><rect x="390" y="316" width="2" height="2"/><rect x="390" y="322" width="2" height="2"/><rect x="390" y="364" width="2" height="2"/><rect x="390" y="366" width="2" height="2"/><rect x="392" y="4" width="2" height="2"/><rect x="392" y="40" width="2" height="2"/><rect x="392" y="42" width="2" height="2"/><rect x="392" y="92" width="2" height="2"/><rect x="392" y="168" width="2" height="2"/><rect x="392" y="170" width="2" height="2"/><rect x="392" y="172" width="2" height="2"/><rect x="392" y="188" width="2" height="2"/><rect x="392" y="192" width="2" height="2"/><rect x="392" y="248" width="2" height="2"/><rect x="392" y="250" width="2" height="2"/><rect x="392" y="252" width="2" height="2"/><rect x="392" y="318" width="2" height="2"/><rect x="392" y="320" width="2" height="2"/><rect x="394" y="4" width="2" height="2"/><rect x="394" y="40" width="2" height="2"/><rect x="394" y="42" width="2" height="2"/><rect x="394" y="190" width="2" height="2"/><rect x="396" y="72" width="2" height="2"/><rect x="396" y="74" width="2" height="2"/><rect x="396" y="76" width="2" height="2"/><rect x="396" y="300" width="2" height="2"/><rect x="396" y="302" width="2" height="2"/><rect x="396" y="304" width="2" height="2"/><rect x="396" y="372" width="2" height="2"/><rect x="396" y="374" width="2" height="2"/><rect x="398" y="372" width="2" height="2"/><rect x="398" y="374" width="2" height="2"/></svg>
<div style="left:0px;top:1051px;width:1920px;height:29px;background:#d4d0c8;box-shadow:inset 0 1px #ffffff,inset 0 2px #ebe8e2,0 -1px 6px rgba(0,0,0,0.35)"></div>
<div style="left:0px;top:1079px;width:1920px;height:1px;background:#404040"></div>
<div style="left:4px;top:1055px;width:80px;height:22px;background:#d4d0c8;box-shadow:inset 1px 1px #404040,inset 2px 2px #808080,inset -1px -1px #ffffff"></div>
<svg style="left:10px;top:1058px" width="16" height="16" viewBox="0 0 16 16"><path d="M5,3 L3,1 M11,3 L13,1 M3,8 L1,7 M13,8 L15,7 M3,12 L1,14 M13,12 L15,14" stroke="#333" stroke-width="1"/><ellipse cx="8" cy="4.5" rx="3" ry="2.5" fill="#555"/><ellipse cx="8" cy="10" rx="5" ry="5.5" fill="#e03020"/><circle cx="6" cy="9" r="0.9" fill="#600"/><circle cx="10" cy="9" r="0.9" fill="#600"/><circle cx="6" cy="12" r="0.9" fill="#600"/><circle cx="10" cy="12" r="0.9" fill="#600"/></svg>
<svg style="left:94px;top:1058px" width="16" height="16" viewBox="0 0 16 16"><circle cx="8" cy="8" r="7.5" fill="#2a6ad0"/><path d="M8,1 C 12,2 15,5 14,9 C 12,12 10,14 7,15 C 9,11 6,9 9,6 C 10,4 8,3 8,1Z" fill="#4ad040"/><circle cx="4" cy="12" r="3" fill="#d00000"/></svg>
<svg style="left:118px;top:1058px" width="16" height="16" viewBox="0 0 16 16"><rect x="0.5" y="1.5" width="15" height="13" fill="#000" stroke="#666"/><path d="M2,8 H5 L7,4 L9,12 L11,8 H14" stroke="#3ad03a" fill="none"/></svg>
<svg style="left:142px;top:1058px" width="16" height="16" viewBox="0 0 16 16"><rect x="0.5" y="1.5" width="15" height="13" fill="#000" stroke="#555"/><rect x="1" y="2" width="14" height="2" fill="#a03a20"/><path d="M3,7 L5,9 L3,11" stroke="#ccc" fill="none"/></svg>
<svg style="left:166px;top:1058px" width="16" height="16" viewBox="0 0 16 16"><rect x="2.5" y="1.5" width="11" height="14" fill="#fff" stroke="#333"/><path d="M4,5 H12 M4,7.5 H12 M4,10 H12 M4,12.5 H12" stroke="#222"/></svg>
<svg style="left:190px;top:1058px" width="16" height="16" viewBox="0 0 16 16"><path d="M1,3 H6 L7,4 H15 V14 H1 Z" fill="#d8b070" stroke="#8a6a3a"/><circle cx="8" cy="9" r="3" fill="#cde" stroke="#333"/><path d="M10,11 L14,15" stroke="#a02020" stroke-width="2"/></svg>
<div style="left:216px;top:1056px;width:140px;height:21px;background:#d4d0c8;box-shadow:inset 1px 1px #ffffff,inset -1px -1px #404040,inset -2px -2px #808080"></div>
<div style="left:220px;top:1058px;width:16px;height:16px"><div style="left:0;top:0;width:16px;height:16px;background:#ffff00;font:bold 7px 'Liberation Sans';line-height:16px;text-align:center;letter-spacing:-0.5px;color:#000">2048</div></div>
<div style="left:359px;top:1056px;width:140px;height:21px;background:#d4d0c8;box-shadow:inset 1px 1px #ffffff,inset -1px -1px #404040,inset -2px -2px #808080"></div>
<div style="left:363px;top:1058px;width:16px;height:16px"><svg width="16" height="16" viewBox="0 0 16 16"><path d="M6,1 L8,2 C 12,3 13,8 13,15 H4 C 4,11 8,10 7,7 L4,9 L2,8 L5,3 Z" fill="#eee" stroke="#999" stroke-width="0.8"/></svg></div>
<div style="left:502px;top:1056px;width:140px;height:21px;background:#d4d0c8;box-shadow:inset 1px 1px #ffffff,inset -1px -1px #404040,inset -2px -2px #808080"></div>
<div style="left:506px;top:1058px;width:16px;height:16px"><svg width="16" height="16" viewBox="0 0 16 16" shape-rendering="crispEdges"><rect x="0" y="0" width="16" height="16" fill="#fff"/><rect x="10" y="0" width="5" height="5" fill="#000"/><rect x="0" y="5" width="5" height="5" fill="#000"/><rect x="10" y="5" width="5" height="5" fill="#000"/><rect x="5" y="10" width="5" height="6" fill="#000"/><rect x="10" y="10" width="5" height="6" fill="#000"/></svg></div>
<div style="left:645px;top:1056px;width:140px;height:21px;background:#d4d0c8;box-shadow:inset 1px 1px #ffffff,inset -1px -1px #404040,inset -2px -2px #808080"></div>
<div style="left:649px;top:1058px;width:16px;height:16px"><svg width="16" height="16" viewBox="0 0 16 16"><path d="M8,0 V16 M0,8 H16 M2.5,2.5 L13.5,13.5 M13.5,2.5 L2.5,13.5" stroke="#000" stroke-width="1.2"/><circle cx="8" cy="8" r="5" fill="#000"/><circle cx="6.5" cy="6.5" r="1.3" fill="#fff"/></svg></div>
<div style="left:788px;top:1056px;width:140px;height:21px;background:#d4d0c8;box-shadow:inset 1px 1px #ffffff,inset -1px -1px #404040,inset -2px -2px #808080"></div>
<div style="left:792px;top:1058px;width:16px;height:16px"><svg width="16" height="16" viewBox="0 0 16 16"><rect x="0" y="0" width="16" height="16" rx="2" fill="#000"/><rect x="1" y="8" width="1" height="4" fill="#fff"/><rect x="14" y="2" width="1" height="4" fill="#fff"/><path d="M8,1 V15" stroke="#fff" stroke-dasharray="1 1"/><circle cx="11" cy="4" r="1.3" fill="#f00"/></svg></div>
<div style="left:931px;top:1056px;width:140px;height:21px;background:#d4d0c8;box-shadow:inset 1px 1px #ffffff,inset -1px -1px #404040,inset -2px -2px #808080"></div>
<div style="left:935px;top:1058px;width:16px;height:16px"><svg width="16" height="16" viewBox="0 0 16 16"><path d="M1,15 L5,9 C 6,7 10,7 11,9 L15,15 Z" fill="#7ab800"/><path d="M2,6 C 3,2 9,0 10,4 C 11,7 7,9 5,10" fill="none" stroke="#8ad000" stroke-width="2.5" stroke-linecap="round"/><path d="M4,11 H12 M3,13 H13" stroke="#5a9000" stroke-width="0.8"/></svg></div>
<div style="left:1074px;top:1056px;width:140px;height:21px;background:#d4d0c8;box-shadow:inset 1px 1px #ffffff,inset -1px -1px #404040,inset -2px -2px #808080"></div>
<div style="left:1078px;top:1058px;width:16px;height:16px"><svg width="16" height="16" viewBox="0 0 16 16"><path d="M3,4 L11,2 L14,4 V14 L6,16 L3,14 Z" fill="#2850a8" stroke="#102060" stroke-width="0.8"/><path d="M4,4 L11,2.5 L13,4 L6,5.5 Z" fill="#eee"/><rect x="8" y="3" width="2" height="1" fill="#d00"/></svg></div>
<div style="left:1217px;top:1056px;width:140px;height:21px;background-color:#d4d0c8;background-image:repeating-conic-gradient(#ffffff 0 25%,#d4d0c8 0 50%);background-size:2px 2px;box-shadow:inset 1px 1px #404040,inset 2px 2px #808080,inset -1px -1px #ffffff"></div>
<div style="left:1222px;top:1059px;width:16px;height:16px"><svg width="16" height="16" viewBox="0 0 16 16"><rect x="0" y="1" width="3" height="3" fill="#0000ff"/><rect x="4" y="1" width="3" height="3" fill="#0000ff"/><rect x="9" y="1" width="3" height="3" fill="#0000ff"/><rect x="13" y="1" width="3" height="3" fill="#0000ff"/><rect x="0" y="5" width="3" height="3" fill="#00ff00"/><rect x="4" y="5" width="3" height="3" fill="#00ff00"/><rect x="9" y="5" width="3" height="3" fill="#00ff00"/><rect x="13" y="5" width="3" height="3" fill="#00ff00"/><rect x="2" y="9" width="2" height="2" fill="#f00"/><rect x="5" y="14" width="6" height="2" fill="#fff"/></svg></div>
<div style="left:1728px;top:1055px;width:124px;height:22px;box-shadow:inset 1px 1px #808080,inset -1px -1px #ffffff"></div>
<div style="left:1732px;top:1059px;width:26px;height:15px;background:#000;box-shadow:inset 1px 1px #808080,inset -1px -1px #ffffff"></div>
<svg style="left:1733px;top:1060px" width="24" height="13" viewBox="0 0 24 13"><path d="M0,13 V9 L2,10 L4,8 L6,9 L8,7 L10,9 L13,8 L15,7 L18,6.5 L21,7 L24,6 V13 Z" fill="#00c000"/></svg>
<div style="left:1762px;top:1059px;width:26px;height:15px;background:#000;box-shadow:inset 1px 1px #808080,inset -1px -1px #ffffff"></div>
<div style="left:1763px;top:1072px;width:24px;height:1px;background:#00c0e0"></div>
<svg style="left:1792px;top:1058px" width="16" height="16" viewBox="0 0 16 16"><rect x="1" y="0" width="3" height="16" fill="#888"/><rect x="0" y="1" width="5" height="3" fill="#333"/><rect x="5.5" y="1.5" width="9" height="11" fill="#2060c0" stroke="#333"/><rect x="6" y="13" width="8" height="2" fill="#777"/></svg>
<svg style="left:1814px;top:1058px" width="14" height="16" viewBox="0 0 14 16"><path d="M1.5,1.5 H7 L9,3.5 V11 H1.5 Z" fill="#eee" stroke="#555"/><path d="M4.5,5.5 H10 L12.5,8 V15 H4.5 Z" fill="#fff" stroke="#444"/><path d="M6,10 H11 M6,12.5 H11" stroke="#666"/></svg>
<svg style="left:1833px;top:1058px" width="16" height="16" viewBox="0 0 16 16"><path d="M1,6 H4 L8,2 V14 L4,10 H1 Z" fill="#666" stroke="#222"/><path d="M10,5 C 11,7 11,9 10,11 M12,3.5 C 14,6 14,10 12,12.5" stroke="#222" fill="none" stroke-width="1.3"/></svg>
<div style="left:1855px;top:1055px;width:61px;height:22px;box-shadow:inset 1px 1px #808080,inset -1px -1px #ffffff"></div>
<div style="left:1377px;top:57px;height:20px;font:normal 12px 'Liberation Sans';line-height:20px;color:#b58863;white-space:pre;">8</div>
<div style="left:1377px;top:121px;height:20px;font:normal 12px 'Liberation Sans';line-height:20px;color:#f0d9b5;white-space:pre;">7</div>
<div style="left:1377px;top:185px;height:20px;font:normal 12px 'Liberation Sans';line-height:20px;color:#b58863;white-space:pre;">6</div>
<div style="left:1377px;top:249px;height:20px;font:normal 12px 'Liberation Sans';line-height:20px;color:#f0d9b5;white-space:pre;">5</div>
<div style="left:1377px;top:313px;height:20px;font:normal 12px 'Liberation Sans';line-height:20px;color:#b58863;white-space:pre;">4</div>
<div style="left:1377px;top:377px;height:20px;font:normal 12px 'Liberation Sans';line-height:20px;color:#f0d9b5;white-space:pre;">3</div>
<div style="left:1377px;top:441px;height:20px;font:normal 12px 'Liberation Sans';line-height:20px;color:#b58863;white-space:pre;">2</div>
<div style="left:1377px;top:505px;height:20px;font:normal 12px 'Liberation Sans';line-height:20px;color:#f0d9b5;white-space:pre;">1</div>
<div style="left:1332px;top:683px;height:20px;font:normal 12px 'Liberation Sans';line-height:20px;color:#000;white-space:pre;transform:scaleX(0.878);transform-origin:0 0;">10</div>
<div style="left:1414px;top:683px;height:20px;font:normal 12px 'Liberation Sans';line-height:20px;color:#000;white-space:pre;transform:scaleX(0.873);transform-origin:0 0;">155.6</div>
<div style="left:28px;top:1057px;height:20px;font:bold 12px 'Liberation Sans';line-height:20px;color:#000;white-space:pre;transform:scaleX(1.059);transform-origin:0 0;">Serenity</div>
<div style="left:238px;top:1056px;height:20px;font:normal 12px 'Liberation Sans';line-height:20px;color:#000;white-space:pre;transform:scaleX(0.888);transform-origin:0 0;">2048</div>
<div style="left:381px;top:1056px;height:20px;font:normal 12px 'Liberation Sans';line-height:20px;color:#000;white-space:pre;transform:scaleX(0.911);transform-origin:0 0;">Chess</div>
<div style="left:524px;top:1056px;height:20px;font:normal 12px 'Liberation Sans';line-height:20px;color:#000;white-space:pre;transform:scaleX(0.900);transform-origin:0 0;">Conway</div>
<div style="left:667px;top:1056px;height:20px;font:normal 12px 'Liberation Sans';line-height:20px;color:#000;white-space:pre;transform:scaleX(0.925);transform-origin:0 0;">Minesweeper</div>
<div style="left:810px;top:1056px;height:20px;font:normal 12px 'Liberation Sans';line-height:20px;color:#000;white-space:pre;transform:scaleX(0.896);transform-origin:0 0;">Pong</div>
<div style="left:953px;top:1056px;height:20px;font:normal 12px 'Liberation Sans';line-height:20px;color:#000;white-space:pre;transform:scaleX(0.865);transform-origin:0 0;">Snake</div>
<div style="left:1096px;top:1056px;height:20px;font:normal 12px 'Liberation Sans';line-height:20px;color:#000;white-space:pre;transform:scaleX(1.010);transform-origin:0 0;">Score: 0 - Solitaire</div>
<div style="left:1241px;top:1057px;height:20px;font:bold 12px 'Liberation Sans';line-height:20px;color:#000;white-space:pre;transform:scaleX(0.994);transform-origin:0 0;">Breakout</div>
<div style="left:1864px;top:1056px;height:20px;font:normal 12px 'Liberation Sans';line-height:20px;color:#000;white-space:pre;transform:scaleX(0.910);transform-origin:0 0;">11:23:32</div></div></body></html>
